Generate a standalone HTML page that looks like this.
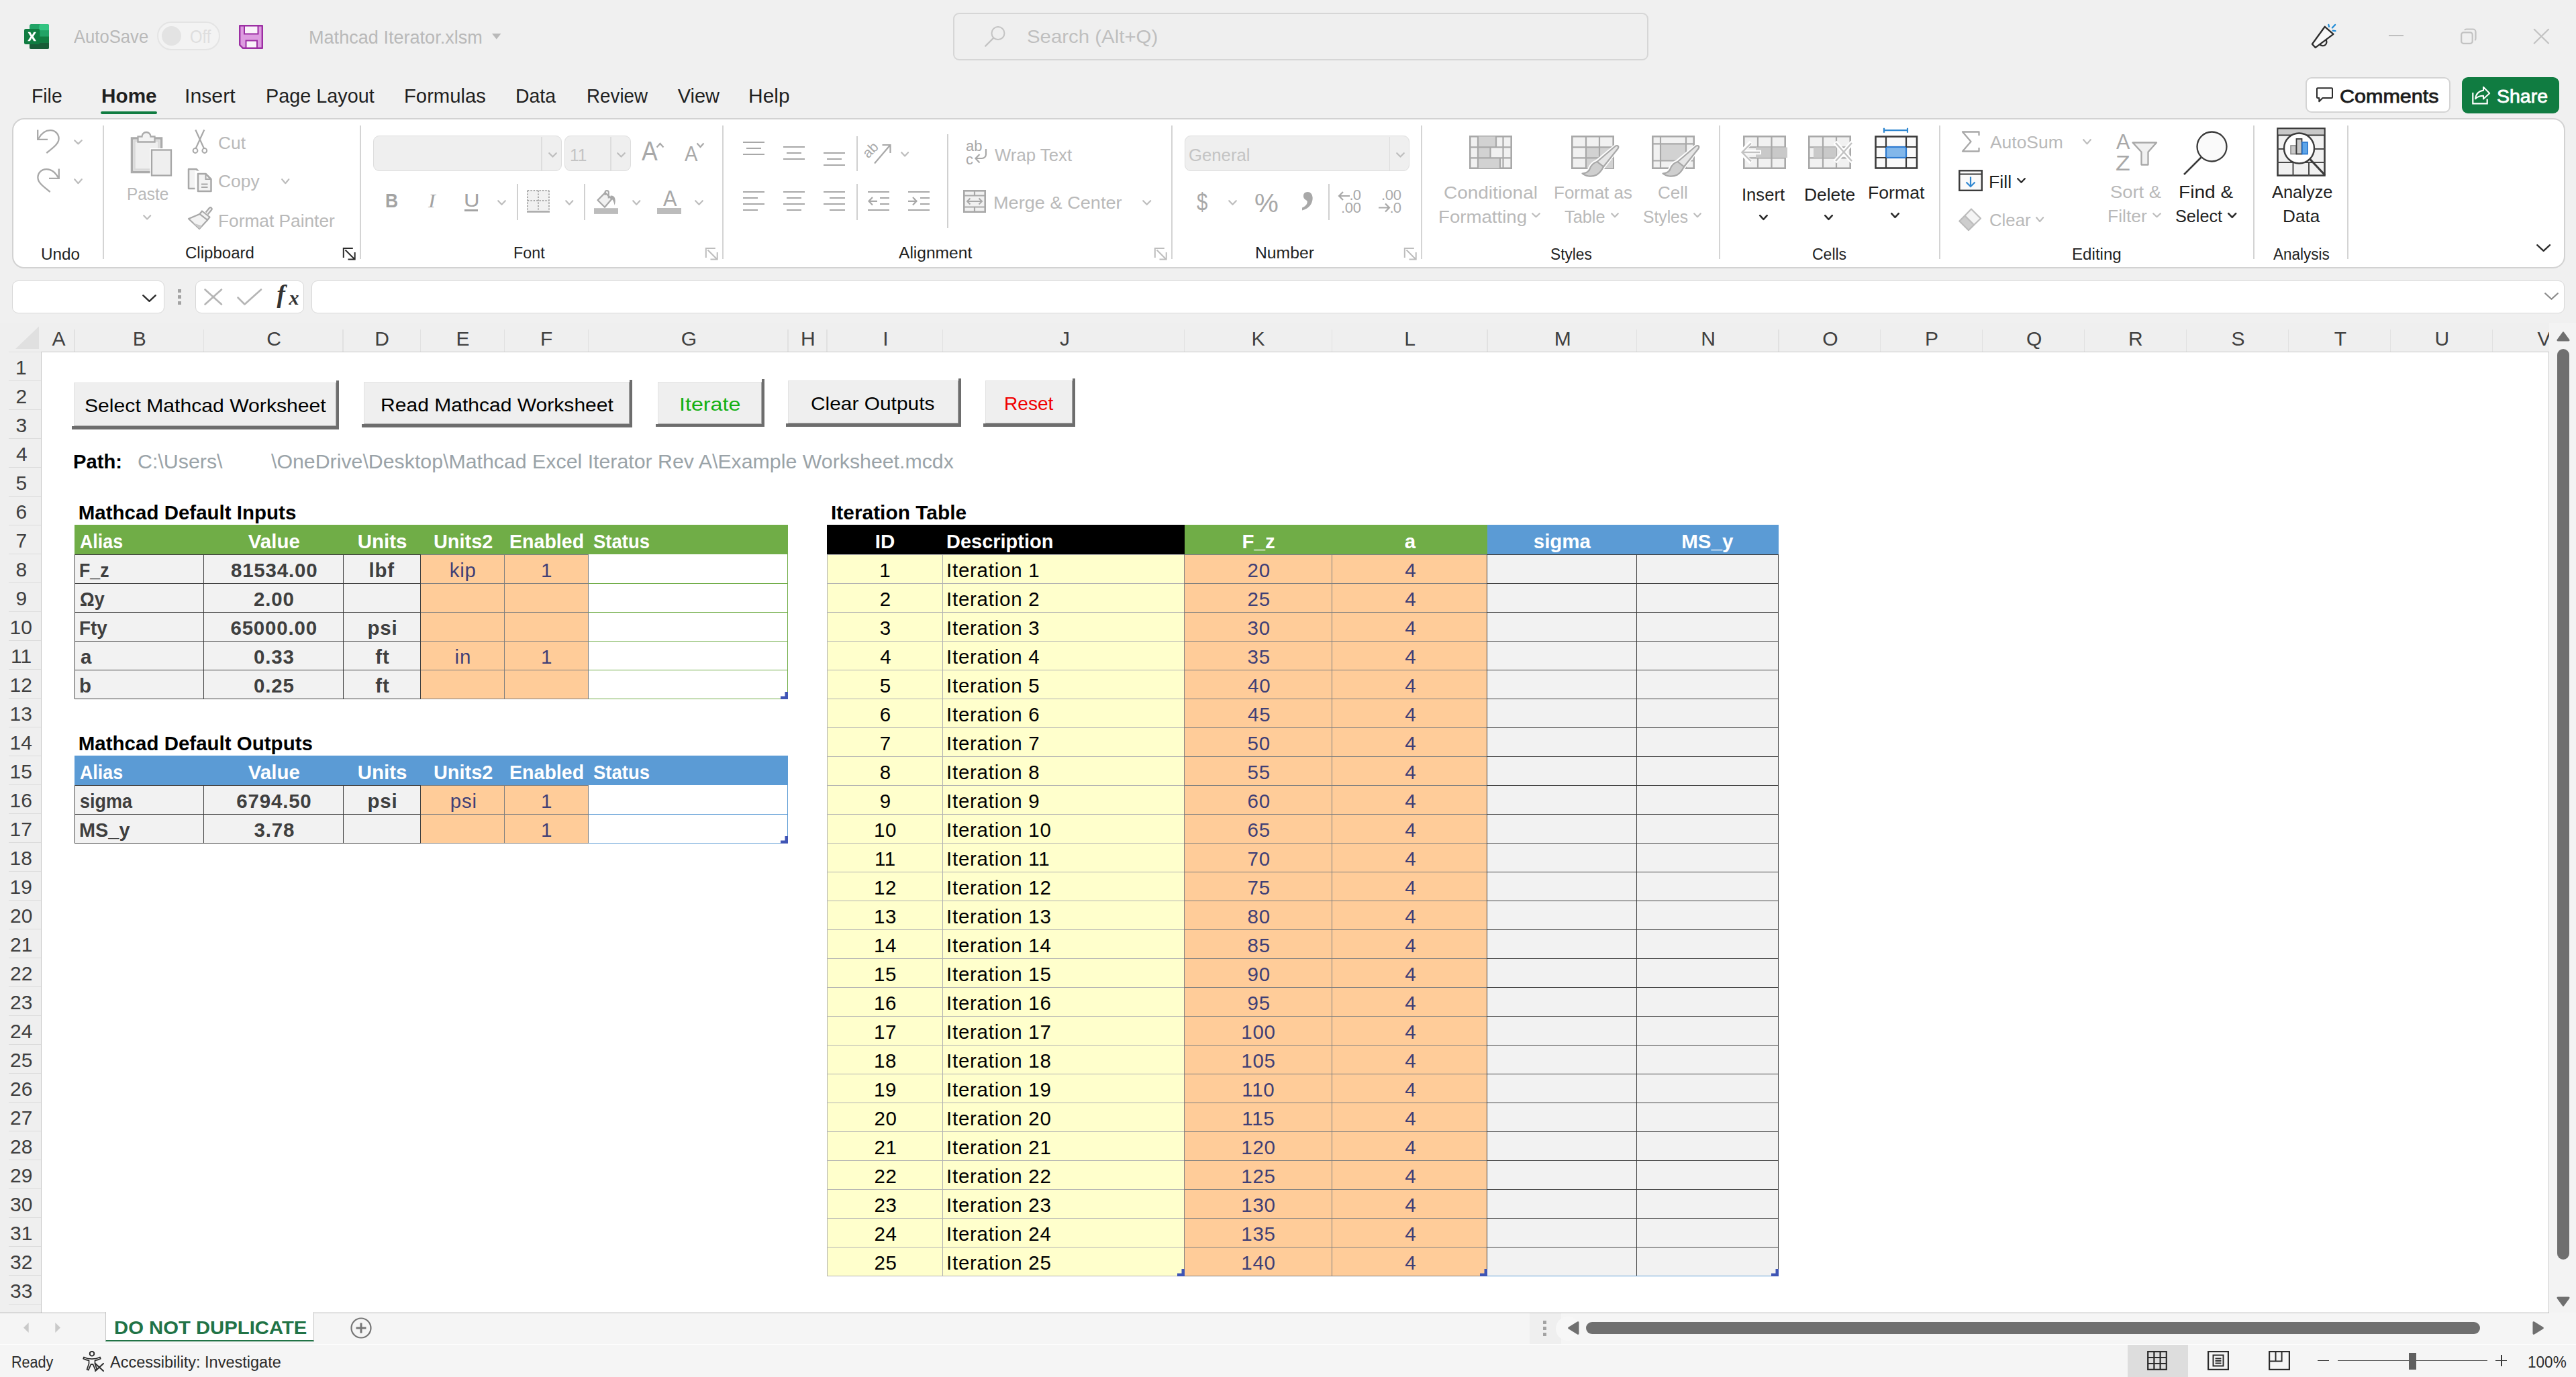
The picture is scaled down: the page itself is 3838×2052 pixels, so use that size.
<!DOCTYPE html>
<html lang="en"><head><meta charset="utf-8"><title>Mathcad Iterator.xlsm - Excel</title>
<style>
html,body{margin:0;padding:0;}
body{width:3838px;height:2052px;overflow:hidden;position:relative;background:#f0f0f0;font-family:"Liberation Sans",sans-serif;color:#1a1a1a;}
div,span.t,svg.i{position:absolute;}
div{box-sizing:border-box;}
span.t{white-space:pre;transform-origin:0 50%;}
svg.i{overflow:visible;}
</style></head><body>
<svg class="i" style="left:35.5px;top:35.5px;" width="37" height="37" viewBox="0 0 37 37">
<rect x="8" y="0" width="29" height="37" rx="2.500" fill="#21a366"/>
<rect x="22.500" y="0" width="14.500" height="9.500" rx="2" fill="#33c481"/><rect x="22.500" y="4" width="14.500" height="5.500" fill="#33c481"/>
<rect x="8" y="9.250" width="14.500" height="9.250" fill="#107c41"/><rect x="22.500" y="9.250" width="14.500" height="9.250" fill="#21a366"/>
<rect x="8" y="18.500" width="14.500" height="9.250" fill="#185c37"/><rect x="22.500" y="18.500" width="14.500" height="9.250" fill="#107c41"/>
<path d="M8 27.750h29v6.750a2.500 2.500 0 0 1-2.500 2.500h-24a2.500 2.500 0 0 1-2.500-2.500z" fill="#185c37"/>
<rect x="0" y="7" width="23.300" height="23" rx="2.300" fill="#107c41"/>
<path d="M5.400 11.800h3.800l2.500 4.600 2.600-4.600h3.600l-4.200 6.700 4.300 6.700h-3.800l-2.700-4.800-2.700 4.800H5.100l4.400-6.700z" fill="#fff"/>
</svg>
<span class="t" style="left:109.7px;top:37.77px;font-size:27.5px;line-height:34px;color:#b9b9b9;transform:scaleX(0.9319);">AutoSave</span>
<div style="left:233.5px;top:31.7px;width:94.5px;height:43.1px;background:#f3f3f3;border:2px solid #e4e4e4;border-radius:22px;"></div>
<div style="left:240.5px;top:38.5px;width:29.5px;height:29.5px;background:#e3e3e3;border-radius:50%;"></div>
<span class="t" style="left:282.54px;top:37.77px;font-size:27.5px;line-height:34px;color:#dedede;transform:scaleX(0.8639);">Off</span>
<svg class="i" style="left:356px;top:37px;" width="36" height="36" viewBox="0 0 36 36">
<path d="M1.200 1.200h33.600v33.600H6L1.200 30z" fill="#dd9be0" stroke="#9c2fa3" stroke-width="2.400" stroke-linejoin="round"/>
<rect x="8" y="1.500" width="20.500" height="12" fill="#faf2fa" stroke="#9c2fa3" stroke-width="2"/>
<rect x="10.500" y="23.500" width="16.500" height="11" fill="#faf2fa" stroke="#9c2fa3" stroke-width="2"/>
</svg>
<span class="t" style="left:460.02px;top:38.54px;font-size:27.3px;line-height:34px;color:#b9b9b9;transform:scaleX(0.9922);">Mathcad Iterator.xlsm</span>
<svg class="i" style="left:733px;top:49.5px;" width="13.5" height="9" viewBox="0 0 13.5 9"><path d="M0 0h13.5l-6.75 8.5z" fill="#b9b9b9"/></svg>
<div style="left:1420px;top:18.7px;width:1035.7px;height:71.8px;background:#efefef;border:2px solid #d6d6d6;border-radius:9px;"></div>
<svg class="i" style="left:1467px;top:38px;" width="32" height="32" viewBox="0 0 32 32"><circle cx="20" cy="11.5" r="9.5" fill="none" stroke="#c3c3c3" stroke-width="2"/><path d="M13.2 18.6L1.2 30.6" stroke="#c3c3c3" stroke-width="2.2" stroke-linecap="round"/></svg>
<span class="t" style="left:1529.53px;top:38.07px;font-size:27.5px;line-height:34px;color:#bfbfbf;transform:scaleX(1.0689);">Search (Alt+Q)</span>
<svg class="i" style="left:3444px;top:35px;" width="38" height="38" viewBox="0 0 38 38">
<path d="M12.300 31A5.500 5.500 0 0 0 21.300 24.200" fill="none" stroke="#2b2b2b" stroke-width="2.200"/>
<path d="M19.800 4.800L32.500 15.800 5.800 35.900 0.900 30.800z" fill="#f8f8f8" stroke="#2b2b2b" stroke-width="2.300" stroke-linejoin="round"/>
<path d="M25.400 1.900l0.700 2.900M30.800 6.500l4.300-4.600M31.700 10.700l3.900 0.500" stroke="#1e8ad6" stroke-width="2.200" stroke-linecap="round"/>
</svg>
<div style="left:3559px;top:51.5px;width:22px;height:2px;background:#bfbfbf;"></div>
<svg class="i" style="left:3666px;top:42px;" width="24" height="24" viewBox="0 0 24 24"><rect x="1.200" y="6.300" width="16.500" height="16.500" rx="3.300" fill="none" stroke="#c2c2c2" stroke-width="2.200"/><path d="M6 2.800a3 3 0 0 1 2.500-1.300H18.500a4 4 0 0 1 4 4V15.500a3 3 0 0 1-1.300 2.500" fill="none" stroke="#c2c2c2" stroke-width="2.200"/></svg>
<svg class="i" style="left:3775px;top:43px;" width="23" height="22" viewBox="0 0 23 22"><path d="M0.800 0.800L22 21.500M22 0.800L0.800 21.500" stroke="#c2c2c2" stroke-width="2.200" stroke-linecap="round"/></svg>
<span class="t" style="left:47.05px;top:125.35px;font-size:29px;line-height:36px;color:#1f1f1f;transform:scaleX(0.9773);">File</span>
<span class="t" style="left:150.97px;top:125.35px;font-size:29px;line-height:36px;font-weight:700;color:#1f1f1f;transform:scaleX(1.0253);">Home</span>
<div style="left:150px;top:165.5px;width:83.5px;height:4.6px;background:#107c41;border-radius:2.3px;"></div>
<span class="t" style="left:274.91px;top:125.35px;font-size:29px;line-height:36px;color:#1f1f1f;transform:scaleX(1.0429);">Insert</span>
<span class="t" style="left:395.61px;top:125.35px;font-size:29px;line-height:36px;color:#1f1f1f;transform:scaleX(0.9932);">Page Layout</span>
<span class="t" style="left:601.98px;top:125.35px;font-size:29px;line-height:36px;color:#1f1f1f;transform:scaleX(1.0085);">Formulas</span>
<span class="t" style="left:768.04px;top:125.35px;font-size:29px;line-height:36px;color:#1f1f1f;transform:scaleX(0.98);">Data</span>
<span class="t" style="left:873.68px;top:125.35px;font-size:29px;line-height:36px;color:#1f1f1f;transform:scaleX(0.9581);">Review</span>
<span class="t" style="left:1009.7px;top:125.35px;font-size:29px;line-height:36px;color:#1f1f1f;">View</span>
<span class="t" style="left:1114.63px;top:125.35px;font-size:29px;line-height:36px;color:#1f1f1f;transform:scaleX(1.0333);">Help</span>
<div style="left:3435px;top:115.3px;width:216.3px;height:53px;background:#fff;border:2px solid #d4d4d4;border-radius:9px;"></div>
<svg class="i" style="left:3451px;top:130px;" width="25" height="23" viewBox="0 0 25 23"><path d="M2 1.2h21a1 1 0 0 1 1 1V15a1 1 0 0 1-1 1H9.5L4.3 21.3V16H2a1 1 0 0 1-1-1V2.2a1 1 0 0 1 1-1z" fill="none" stroke="#2b2b2b" stroke-width="2" stroke-linejoin="round"/></svg>
<span class="t" style="left:3486.33px;top:125.12px;font-size:28.5px;line-height:36px;color:#1b1b1b;transform:scaleX(1.0701);-webkit-text-stroke:0.8px #1b1b1b;">Comments</span>
<div style="left:3668px;top:115px;width:145px;height:53.6px;background:#107c41;border-radius:9px;"></div>
<svg class="i" style="left:3683px;top:129px;" width="28" height="27" viewBox="0 0 28 27"><path d="M1.300 9V25.400H22.700V18.500" fill="none" stroke="#fff" stroke-width="2.200"/><path d="M17 0.800L26.200 10 17 18.500V13.800C11.500 13.800 8 15.200 5.200 18.300 5.700 11.500 10 6.800 17 5.800z" fill="none" stroke="#fff" stroke-width="2" stroke-linejoin="round"/></svg>
<span class="t" style="left:3720px;top:125.12px;font-size:28.5px;line-height:36px;color:#fff;-webkit-text-stroke:0.8px #fff;">Share</span>
<div style="left:18px;top:176px;width:3804px;height:224px;background:#fff;border:2px solid #d2d2d2;border-radius:18px;"></div>
<div style="left:153.2px;top:187px;width:1.7px;height:199px;background:#d4d4d4;"></div>
<div style="left:536.2px;top:187px;width:1.7px;height:199px;background:#d4d4d4;"></div>
<div style="left:1076.2px;top:187px;width:1.7px;height:199px;background:#d4d4d4;"></div>
<div style="left:1745.2px;top:187px;width:1.7px;height:199px;background:#d4d4d4;"></div>
<div style="left:2117.2px;top:187px;width:1.7px;height:199px;background:#d4d4d4;"></div>
<div style="left:2561.2px;top:187px;width:1.7px;height:199px;background:#d4d4d4;"></div>
<div style="left:2888.9px;top:187px;width:1.7px;height:199px;background:#d4d4d4;"></div>
<div style="left:3357.2px;top:187px;width:1.7px;height:199px;background:#d4d4d4;"></div>
<div style="left:3497px;top:187px;width:1.7px;height:199px;background:#d4d4d4;"></div>
<svg class="i" style="left:54px;top:192px;" width="36" height="38" viewBox="0 0 36 38"><path d="M2.200 1.500V15.800H17" fill="none" stroke="#a8a8a8" stroke-width="2.300"/><path d="M3.200 14.800C8 6 14.500 2.200 21 2.200c7.500 0 12.600 5.800 12.600 12.300 0 7-6 12-18.300 21.500" fill="none" stroke="#a8a8a8" stroke-width="2.300"/></svg>
<svg class="i" style="left:54px;top:250px;" width="36" height="38" viewBox="0 0 36 38"><g transform="translate(36,0) scale(-1,1)"><path d="M2.200 1.500V15.800H17" fill="none" stroke="#a8a8a8" stroke-width="2.300"/><path d="M3.200 14.800C8 6 14.500 2.200 21 2.200c7.500 0 12.600 5.800 12.600 12.300 0 7-6 12-18.300 21.500" fill="none" stroke="#a8a8a8" stroke-width="2.300"/></g></svg>
<svg class="i" style="left:108px;top:206px;" width="17" height="11.6" viewBox="0 0 17 11.6"><path d="M3.2 3.2 L8.5 8.4 L13.8 3.2" fill="none" stroke="#bdbdbd" stroke-width="2.2" stroke-linecap="round" stroke-linejoin="round"/></svg>
<svg class="i" style="left:108px;top:263.6px;" width="17" height="12.4" viewBox="0 0 17 12.4"><path d="M3.2 3.2 L8.5 9.2 L13.8 3.2" fill="none" stroke="#bdbdbd" stroke-width="2.2" stroke-linecap="round" stroke-linejoin="round"/></svg>
<span class="t" style="left:60.94px;top:364.93px;font-size:23px;line-height:29px;color:#1f1f1f;transform:scaleX(1.0566);">Undo</span>
<svg class="i" style="left:194px;top:195px;" width="64" height="69" viewBox="0 0 64 69">
<rect x="2.500" y="11" width="44" height="50.500" fill="#efefef" stroke="#ababab" stroke-width="3.500"/>
<rect x="6.500" y="15" width="36" height="42.500" fill="none" stroke="#d9d9d9" stroke-width="2.500"/>
<path d="M11.500 16.500V8.500H17.500a6.500 6.500 0 0 1 13 0H36.500V16.500z" fill="#f3f3f3" stroke="#ababab" stroke-width="2.300"/>
<rect x="29.500" y="26" width="33" height="42" fill="#fff"/>
<rect x="32" y="28.500" width="29" height="38" fill="#efefef" stroke="#a6a6a6" stroke-width="2.300"/></svg>
<span class="t" style="left:189.12px;top:272.99px;font-size:26px;line-height:32px;color:#b9b9b9;transform:scaleX(0.9375);">Paste</span>
<svg class="i" style="left:210.6px;top:318px;" width="16.4" height="11.6" viewBox="0 0 16.4 11.6"><path d="M3.2 3.2 L8.2 8.4 L13.2 3.2" fill="none" stroke="#bdbdbd" stroke-width="2.2" stroke-linecap="round" stroke-linejoin="round"/></svg>
<svg class="i" style="left:285px;top:192px;" width="26" height="38" viewBox="0 0 26 38"><path d="M6.300 1.500L19.300 30M19.300 1.500L6.300 30" stroke="#a8a8a8" stroke-width="2.200"/><circle cx="6" cy="32.500" r="3.400" fill="#fff" stroke="#a8a8a8" stroke-width="2"/><circle cx="19.800" cy="32.500" r="3.400" fill="#fff" stroke="#a8a8a8" stroke-width="2"/></svg>
<span class="t" style="left:325.38px;top:196.99px;font-size:26px;line-height:32px;color:#b9b9b9;transform:scaleX(1.015);">Cut</span>
<svg class="i" style="left:279px;top:250px;" width="38" height="37" viewBox="0 0 38 37">
<path d="M2 2H13.500L19.500 8V31H2z" fill="#f3f3f3" stroke="#a8a8a8" stroke-width="2.500" stroke-linejoin="round"/>
<path d="M14 7H27.500L36.200 15.500V35.500H14z" fill="#fff" stroke="#fff" stroke-width="5"/>
<path d="M16 9H27.500L35.500 17V35H16z" fill="#f3f3f3" stroke="#a8a8a8" stroke-width="2.500" stroke-linejoin="round"/>
<path d="M27.500 9V17H35.500" fill="none" stroke="#a8a8a8" stroke-width="2"/>
<path d="M21 24.500H30.500M21 29H30.500" stroke="#a8a8a8" stroke-width="2"/></svg>
<span class="t" style="left:325.38px;top:253.69px;font-size:26px;line-height:32px;color:#b9b9b9;transform:scaleX(1.0183);">Copy</span>
<svg class="i" style="left:416.5px;top:263.6px;" width="16.5" height="12.4" viewBox="0 0 16.5 12.4"><path d="M3.2 3.2 L8.25 9.2 L13.3 3.2" fill="none" stroke="#bdbdbd" stroke-width="2.2" stroke-linecap="round" stroke-linejoin="round"/></svg>
<svg class="i" style="left:279px;top:308px;" width="38" height="35" viewBox="0 0 38 35">
<path d="M27.500 8.500L33 1.800a2.200 2.200 0 0 1 3 3.200L30.500 11.500" fill="#f3f3f3" stroke="#a8a8a8" stroke-width="2.200"/>
<path d="M22 6.500L33.500 15.500 30 20 18.500 11z" fill="#f3f3f3" stroke="#a8a8a8" stroke-width="2.200" stroke-linejoin="round"/>
<path d="M18.500 11L30 20 18 33 2 18z" fill="#f3f3f3" stroke="#a8a8a8" stroke-width="2.200" stroke-linejoin="round"/>
<path d="M9 24.500L22 28.500 18 33 2.500 18.500z" fill="#c9c9c9"/></svg>
<span class="t" style="left:324.98px;top:312.79px;font-size:26px;line-height:32px;color:#b9b9b9;transform:scaleX(1.0106);">Format Painter</span>
<span class="t" style="left:275.55px;top:362.73px;font-size:23px;line-height:29px;color:#1f1f1f;transform:scaleX(1.0454);">Clipboard</span>
<svg class="i" style="left:510.5px;top:368.5px;" width="19" height="19" viewBox="0 0 19 19"><path d="M0.800 15V1.100H14.800M3.500 3.500L17.500 17.500M7.500 17.400H17.700V7" fill="none" stroke="#2b2b2b" stroke-width="2"/></svg>
<div style="left:556px;top:202px;width:280.5px;height:53px;background:#efefef;border:1.800px solid #dddddd;border-radius:9px;"></div>
<div style="left:806px;top:203.5px;width:1.6px;height:50px;background:#dddddd;"></div>
<svg class="i" style="left:814.5px;top:225px;" width="17" height="11.8" viewBox="0 0 17 11.8"><path d="M3.2 3.2 L8.5 8.6 L13.8 3.2" fill="none" stroke="#bdbdbd" stroke-width="2.2" stroke-linecap="round" stroke-linejoin="round"/></svg>
<div style="left:841px;top:202px;width:99px;height:53px;background:#efefef;border:1.800px solid #dddddd;border-radius:9px;"></div>
<div style="left:909px;top:203.5px;width:1.6px;height:50px;background:#dddddd;"></div>
<span class="t" style="left:848.56px;top:214.99px;font-size:26px;line-height:32px;color:#c4c4c4;transform:scaleX(0.9423);">11</span>
<svg class="i" style="left:917px;top:225px;" width="17" height="11.8" viewBox="0 0 17 11.8"><path d="M3.2 3.2 L8.5 8.6 L13.8 3.2" fill="none" stroke="#bdbdbd" stroke-width="2.2" stroke-linecap="round" stroke-linejoin="round"/></svg>
<span class="t" style="left:956px;top:200.47px;font-size:40.5px;line-height:51px;color:#a8a8a8;transform:scaleX(0.8786);">A</span>
<svg class="i" style="left:977px;top:212px;" width="13" height="9" viewBox="0 0 13 9"><path d="M1.500 7.500L6.500 2 11.500 7.500" fill="none" stroke="#a8a8a8" stroke-width="2.200"/></svg>
<span class="t" style="left:1020px;top:209.76px;font-size:31px;line-height:39px;color:#a8a8a8;transform:scaleX(0.9381);">A</span>
<svg class="i" style="left:1037px;top:212px;" width="13" height="9" viewBox="0 0 13 9"><path d="M1.500 1.500L6.500 7 11.500 1.500" fill="none" stroke="#a8a8a8" stroke-width="2.200"/></svg>
<span class="t" style="left:574.21px;top:280.28px;font-size:29.5px;line-height:37px;font-weight:700;color:#a3a3a3;transform:scaleX(0.8947);">B</span>
<span class="t" style="left:638.08px;top:279.61px;font-size:30px;line-height:38px;font-style:italic;color:#a3a3a3;font-family:'Liberation Serif',serif;transform:scaleX(1.0769);">I</span>
<span class="t" style="left:690.71px;top:280.42px;font-size:28.5px;line-height:36px;color:#a3a3a3;transform:scaleX(1.1471);">U</span>
<div style="left:692px;top:312px;width:20px;height:3px;background:#a3a3a3;"></div>
<svg class="i" style="left:739px;top:296px;" width="17" height="12" viewBox="0 0 17 12"><path d="M3.2 3.2 L8.5 8.8 L13.8 3.2" fill="none" stroke="#bdbdbd" stroke-width="2.2" stroke-linecap="round" stroke-linejoin="round"/></svg>
<div style="left:770.2px;top:274px;width:1.7px;height:53.6px;background:#d0d0d0;"></div>
<svg class="i" style="left:785px;top:283px;" width="34" height="34" viewBox="0 0 34 34"><rect x="0" y="0" width="34" height="32" fill="#f1f1f1"/>
<path d="M1 1H33M1 1V31M33 1V31M17 1V31M1 16H33" fill="none" stroke="#a8a8a8" stroke-width="2" stroke-dasharray="2.200 2.200"/>
<path d="M0 32.500H34" stroke="#a8a8a8" stroke-width="2.600"/></svg>
<svg class="i" style="left:839.5px;top:296px;" width="16.5" height="12" viewBox="0 0 16.5 12"><path d="M3.2 3.2 L8.25 8.8 L13.3 3.2" fill="none" stroke="#bdbdbd" stroke-width="2.2" stroke-linecap="round" stroke-linejoin="round"/></svg>
<div style="left:870.2px;top:274px;width:1.7px;height:53.6px;background:#d0d0d0;"></div>
<svg class="i" style="left:885px;top:282px;" width="36" height="38" viewBox="0 0 36 38">
<path d="M16.600 5.100L5.500 16.200 16 26.700 26.500 14.400z" fill="#f1f1f1" stroke="#a8a8a8" stroke-width="2.300" stroke-linejoin="round"/>
<path d="M16.600 9V4.800a2.600 2.600 0 0 1 5.200 0V13.500" fill="none" stroke="#a8a8a8" stroke-width="2.200"/>
<path d="M24.500 9.800C29 8.800 31.500 12 31.700 16.800 31.800 19.500 31.200 22 30.600 24 29.700 18.500 27.800 14.800 24.300 13.600z" fill="#a8a8a8"/>
<rect x="0" y="28.200" width="36" height="8.700" fill="#bcbcbc"/></svg>
<svg class="i" style="left:939.5px;top:296px;" width="16.5" height="12" viewBox="0 0 16.5 12"><path d="M3.2 3.2 L8.25 8.8 L13.3 3.2" fill="none" stroke="#bdbdbd" stroke-width="2.2" stroke-linecap="round" stroke-linejoin="round"/></svg>
<span class="t" style="left:987.5px;top:274.79px;font-size:33.5px;line-height:42px;color:#a8a8a8;transform:scaleX(0.9174);">A</span>
<div style="left:979px;top:310.2px;width:36px;height:8.7px;background:#bcbcbc;"></div>
<svg class="i" style="left:1033px;top:296px;" width="17" height="12" viewBox="0 0 17 12"><path d="M3.2 3.2 L8.5 8.8 L13.8 3.2" fill="none" stroke="#bdbdbd" stroke-width="2.2" stroke-linecap="round" stroke-linejoin="round"/></svg>
<span class="t" style="left:765.39px;top:363.13px;font-size:23px;line-height:29px;color:#1f1f1f;transform:scaleX(1.013);">Font</span>
<svg class="i" style="left:1050.5px;top:368.5px;" width="19" height="19" viewBox="0 0 19 19"><path d="M0.800 15V1.100H14.800M3.500 3.500L17.500 17.500M7.500 17.400H17.700V7" fill="none" stroke="#bdbdbd" stroke-width="2"/></svg>
<div style="left:1107px;top:211px;width:32px;height:2px;background:#a8a8a8;"></div>
<div style="left:1112px;top:220px;width:22px;height:2px;background:#a8a8a8;"></div>
<div style="left:1107px;top:229px;width:32px;height:2px;background:#a8a8a8;"></div>
<div style="left:1167px;top:218px;width:32px;height:2px;background:#a8a8a8;"></div>
<div style="left:1172px;top:227px;width:22px;height:2px;background:#a8a8a8;"></div>
<div style="left:1167px;top:236px;width:32px;height:2px;background:#a8a8a8;"></div>
<div style="left:1227px;top:227px;width:32px;height:2px;background:#a8a8a8;"></div>
<div style="left:1232px;top:236px;width:22px;height:2px;background:#a8a8a8;"></div>
<div style="left:1227px;top:245px;width:32px;height:2px;background:#a8a8a8;"></div>
<div style="left:1276.2px;top:202.6px;width:1.7px;height:52.8px;background:#d0d0d0;"></div>
<svg class="i" style="left:1290px;top:209px;" width="40" height="38" viewBox="0 0 40 38"><text x="2" y="20" font-family="Liberation Sans,sans-serif" font-size="21" fill="#a8a8a8" transform="rotate(-45 12 22)">ab</text>
<path d="M13 34.500L36 7.500M24.500 7H36.500V19" fill="none" stroke="#a8a8a8" stroke-width="2.200"/></svg>
<svg class="i" style="left:1339.7px;top:224px;" width="16.3" height="11.7" viewBox="0 0 16.3 11.7"><path d="M3.2 3.2 L8.15 8.5 L13.1 3.2" fill="none" stroke="#bdbdbd" stroke-width="2.2" stroke-linecap="round" stroke-linejoin="round"/></svg>
<div style="left:1411.2px;top:200px;width:1.7px;height:139.6px;background:#d0d0d0;"></div>
<svg class="i" style="left:1439px;top:208px;" width="34" height="40" viewBox="0 0 34 40"><text x="0" y="17" font-family="Liberation Sans,sans-serif" font-size="22" fill="#a8a8a8">ab</text>
<text x="0" y="36.500" font-family="Liberation Sans,sans-serif" font-size="22" fill="#a8a8a8">c</text>
<path d="M30 14V22a6 6 0 0 1-6 6H15M20.500 22L14.500 28 20.500 34.500" fill="none" stroke="#a8a8a8" stroke-width="2.200"/></svg>
<span class="t" style="left:1482px;top:214.99px;font-size:26px;line-height:32px;color:#b9b9b9;transform:scaleX(0.9915);">Wrap Text</span>
<div style="left:1107px;top:285px;width:32px;height:2px;background:#a8a8a8;"></div>
<div style="left:1107px;top:294px;width:22px;height:2px;background:#a8a8a8;"></div>
<div style="left:1107px;top:303px;width:32px;height:2px;background:#a8a8a8;"></div>
<div style="left:1107px;top:312px;width:22px;height:2px;background:#a8a8a8;"></div>
<div style="left:1167px;top:285px;width:32px;height:2px;background:#a8a8a8;"></div>
<div style="left:1172px;top:294px;width:22px;height:2px;background:#a8a8a8;"></div>
<div style="left:1167px;top:303px;width:32px;height:2px;background:#a8a8a8;"></div>
<div style="left:1172px;top:312px;width:22px;height:2px;background:#a8a8a8;"></div>
<div style="left:1227px;top:285px;width:32px;height:2px;background:#a8a8a8;"></div>
<div style="left:1236px;top:294px;width:23px;height:2px;background:#a8a8a8;"></div>
<div style="left:1227px;top:303px;width:32px;height:2px;background:#a8a8a8;"></div>
<div style="left:1236px;top:312px;width:23px;height:2px;background:#a8a8a8;"></div>
<div style="left:1276.2px;top:274px;width:1.7px;height:53.6px;background:#d0d0d0;"></div>
<div style="left:1293px;top:285px;width:32px;height:2px;background:#a8a8a8;"></div>
<div style="left:1293px;top:312px;width:32px;height:2px;background:#a8a8a8;"></div>
<div style="left:1311px;top:294px;width:14px;height:2px;background:#a8a8a8;"></div>
<div style="left:1311px;top:303px;width:14px;height:2px;background:#a8a8a8;"></div>
<svg class="i" style="left:1293px;top:291px;" width="16" height="18" viewBox="0 0 16 18"><path d="M1.500 8.800H14M7 3L1.500 8.800 7 14.600" fill="none" stroke="#a8a8a8" stroke-width="2.200"/></svg>
<div style="left:1353px;top:285px;width:32px;height:2px;background:#a8a8a8;"></div>
<div style="left:1353px;top:312px;width:32px;height:2px;background:#a8a8a8;"></div>
<div style="left:1371px;top:294px;width:14px;height:2px;background:#a8a8a8;"></div>
<div style="left:1371px;top:303px;width:14px;height:2px;background:#a8a8a8;"></div>
<svg class="i" style="left:1353px;top:291px;" width="16" height="18" viewBox="0 0 16 18"><path d="M0 8.800H12.500M7 3L12.500 8.800 7 14.600" fill="none" stroke="#a8a8a8" stroke-width="2.200"/></svg>
<svg class="i" style="left:1435px;top:283px;" width="34" height="34" viewBox="0 0 34 34"><rect x="1.300" y="1.300" width="31.400" height="31.400" fill="#f1f1f1" stroke="#a8a8a8" stroke-width="2.600"/>
<path d="M1 8.500H33M1 25.500H33M17 1V8.500M17 25.500V33" stroke="#a8a8a8" stroke-width="2.200"/>
<path d="M6 17H28M10.500 12.500L6 17 10.500 21.500M23.500 12.500L28 17 23.500 21.500" fill="none" stroke="#a8a8a8" stroke-width="2"/></svg>
<span class="t" style="left:1479.91px;top:286.29px;font-size:26px;line-height:32px;color:#b9b9b9;transform:scaleX(1.044);">Merge &amp; Center</span>
<svg class="i" style="left:1700px;top:296px;" width="17.4" height="12" viewBox="0 0 17.4 12"><path d="M3.2 3.2 L8.7 8.8 L14.2 3.2" fill="none" stroke="#bdbdbd" stroke-width="2.2" stroke-linecap="round" stroke-linejoin="round"/></svg>
<span class="t" style="left:1338.8px;top:363.13px;font-size:23px;line-height:29px;color:#1f1f1f;transform:scaleX(1.068);">Alignment</span>
<svg class="i" style="left:1719.5px;top:368.5px;" width="19" height="19" viewBox="0 0 19 19"><path d="M0.800 15V1.100H14.800M3.500 3.500L17.500 17.500M7.500 17.400H17.700V7" fill="none" stroke="#bdbdbd" stroke-width="2"/></svg>
<div style="left:1765px;top:202px;width:335px;height:53px;background:#efefef;border:1.800px solid #dddddd;border-radius:9px;"></div>
<div style="left:2069.7px;top:203.5px;width:1.6px;height:50px;background:#dddddd;"></div>
<span class="t" style="left:1771.01px;top:214.99px;font-size:26px;line-height:32px;color:#c4c4c4;transform:scaleX(0.989);">General</span>
<svg class="i" style="left:2078px;top:225px;" width="17" height="11.8" viewBox="0 0 17 11.8"><path d="M3.2 3.2 L8.5 8.6 L13.8 3.2" fill="none" stroke="#bdbdbd" stroke-width="2.2" stroke-linecap="round" stroke-linejoin="round"/></svg>
<span class="t" style="left:1783.4px;top:278.53px;font-size:36px;line-height:45px;color:#a8a8a8;transform:scaleX(0.815);">$</span>
<svg class="i" style="left:1828px;top:296px;" width="17" height="12" viewBox="0 0 17 12"><path d="M3.2 3.2 L8.5 8.8 L13.8 3.2" fill="none" stroke="#bdbdbd" stroke-width="2.2" stroke-linecap="round" stroke-linejoin="round"/></svg>
<span class="t" style="left:1868.67px;top:278.49px;font-size:39px;line-height:49px;color:#a8a8a8;transform:scaleX(1.0333);">%</span>
<span class="t" style="left:1939.13px;top:212.81px;font-size:90px;line-height:112px;font-weight:700;color:#a8a8a8;font-family:'Liberation Serif',serif;transform:scaleX(0.8737);">,</span>
<div style="left:1979.2px;top:274px;width:1.7px;height:53.6px;background:#d0d0d0;"></div>
<svg class="i" style="left:1993px;top:281px;" width="38" height="38" viewBox="0 0 38 38"><text x="17.500" y="17" font-family="Liberation Sans,sans-serif" font-size="22" fill="#a8a8a8" textLength="17.500">.0</text><text x="5" y="35.500" font-family="Liberation Sans,sans-serif" font-size="22" fill="#a8a8a8" textLength="30">.00</text>
<path d="M2 11H18M8 5L2 11 8 17" fill="none" stroke="#a8a8a8" stroke-width="2.200"/></svg>
<svg class="i" style="left:2052px;top:281px;" width="38" height="38" viewBox="0 0 38 38"><text x="6" y="17" font-family="Liberation Sans,sans-serif" font-size="22" fill="#a8a8a8" textLength="30">.00</text><text x="18.500" y="35.500" font-family="Liberation Sans,sans-serif" font-size="22" fill="#a8a8a8" textLength="17.500">.0</text>
<path d="M2 28.500H18M12 22.500L18 28.500 12 34.500" fill="none" stroke="#a8a8a8" stroke-width="2.200"/></svg>
<span class="t" style="left:1869.93px;top:363.13px;font-size:23px;line-height:29px;color:#1f1f1f;transform:scaleX(1.0741);">Number</span>
<svg class="i" style="left:2091.5px;top:368.5px;" width="19" height="19" viewBox="0 0 19 19"><path d="M0.800 15V1.100H14.800M3.500 3.500L17.500 17.500M7.500 17.400H17.700V7" fill="none" stroke="#bdbdbd" stroke-width="2"/></svg>
<svg class="i" style="left:2189px;top:202px;" width="64" height="50" viewBox="0 0 64 50"><rect x="1.300" y="1.300" width="61.400" height="47.400" fill="#f1f1f1" stroke="#a8a8a8" stroke-width="2.600"/>
<rect x="13" y="1.500" width="27" height="15.500" fill="#d2d2d2"/><rect x="13" y="17.500" width="18" height="15.500" fill="#d2d2d2"/><rect x="13" y="33.500" width="33" height="15" fill="#d2d2d2"/>
<path d="M1 17.300H63M1 33.300H63M13 1V49M50.500 1V49" stroke="#a8a8a8" stroke-width="2.200"/>
<path d="M40 1V17.300M31.500 17.300V33.300M46 33.300V49" stroke="#a8a8a8" stroke-width="2.200"/></svg>
<span class="t" style="left:2150.92px;top:270.99px;font-size:26px;line-height:32px;color:#b9b9b9;transform:scaleX(1.0758);">Conditional</span>
<span class="t" style="left:2142.87px;top:306.99px;font-size:26px;line-height:32px;color:#b9b9b9;transform:scaleX(1.0628);">Formatting</span>
<svg class="i" style="left:2280px;top:315.4px;" width="17" height="11.4" viewBox="0 0 17 11.4"><path d="M3.2 3.2 L8.5 8.2 L13.8 3.2" fill="none" stroke="#bdbdbd" stroke-width="2.2" stroke-linecap="round" stroke-linejoin="round"/></svg>
<svg class="i" style="left:2341px;top:202px;" width="70" height="62" viewBox="0 0 70 62"><rect x="1.300" y="1.300" width="61.400" height="47.400" fill="#f1f1f1" stroke="#a8a8a8" stroke-width="2.600"/>
<rect x="22" y="17.500" width="20" height="15.500" fill="#d2d2d2"/><rect x="42" y="17.500" width="20" height="31" fill="#d2d2d2"/><rect x="22" y="33.500" width="20" height="15" fill="#d2d2d2"/>
<path d="M1 17.300H63M1 33.300H63M22 1V49M42 1V49" stroke="#a8a8a8" stroke-width="2.200"/>
<path d="M66 15.500C69.500 14 71.500 16.500 69.500 19.500L48 47C44 54 40 60 30 61.500 24 62 19 60 15.500 56.500 21 56 25 54 27 50 28.500 45 32 40.500 38 38.500z" fill="#fff" stroke="#fff" stroke-width="5" stroke-linejoin="round"/>
<path d="M66 15.500C69.500 14 71.500 16.500 69.500 19.500L48 46.500 38.500 39z" fill="#e6e6e6" stroke="#a8a8a8" stroke-width="2.200" stroke-linejoin="round"/>
<path d="M38.500 39C32 41 29 45.500 27.500 50 26 54 21.500 56 16.500 56.500 21 60.500 30 62.500 38 58.500 43.500 55.500 46 50.500 48 46.500z" fill="#cfcfcf" stroke="#a8a8a8" stroke-width="2.200" stroke-linejoin="round"/></svg>
<span class="t" style="left:2315.01px;top:270.99px;font-size:26px;line-height:32px;color:#b9b9b9;">Format as</span>
<span class="t" style="left:2330.6px;top:306.99px;font-size:26px;line-height:32px;color:#b9b9b9;transform:scaleX(0.9742);">Table</span>
<svg class="i" style="left:2398px;top:315.4px;" width="16" height="11.4" viewBox="0 0 16 11.4"><path d="M3.2 3.2 L8 8.2 L12.8 3.2" fill="none" stroke="#bdbdbd" stroke-width="2.2" stroke-linecap="round" stroke-linejoin="round"/></svg>
<svg class="i" style="left:2461px;top:202px;" width="70" height="62" viewBox="0 0 70 62"><rect x="1.300" y="1.300" width="61.400" height="47.400" fill="#f1f1f1" stroke="#a8a8a8" stroke-width="2.600"/>
<rect x="13" y="12.500" width="38" height="25" fill="#d2d2d2"/>
<path d="M1 12.300H63M1 37.500H63M13 1V49M51 1V49" stroke="#a8a8a8" stroke-width="2.200"/>
<path d="M66 15.500C69.500 14 71.500 16.500 69.500 19.500L48 47C44 54 40 60 30 61.500 24 62 19 60 15.500 56.500 21 56 25 54 27 50 28.500 45 32 40.500 38 38.500z" fill="#fff" stroke="#fff" stroke-width="5" stroke-linejoin="round"/>
<path d="M66 15.500C69.500 14 71.500 16.500 69.500 19.500L48 46.500 38.500 39z" fill="#e6e6e6" stroke="#a8a8a8" stroke-width="2.200" stroke-linejoin="round"/>
<path d="M38.500 39C32 41 29 45.500 27.500 50 26 54 21.500 56 16.500 56.500 21 60.500 30 62.500 38 58.500 43.500 55.500 46 50.500 48 46.500z" fill="#cfcfcf" stroke="#a8a8a8" stroke-width="2.200" stroke-linejoin="round"/></svg>
<span class="t" style="left:2470px;top:270.99px;font-size:26px;line-height:32px;color:#b9b9b9;">Cell</span>
<span class="t" style="left:2447.65px;top:306.99px;font-size:26px;line-height:32px;color:#b9b9b9;transform:scaleX(0.9486);">Styles</span>
<svg class="i" style="left:2521px;top:315.4px;" width="16" height="11.4" viewBox="0 0 16 11.4"><path d="M3.2 3.2 L8 8.2 L12.8 3.2" fill="none" stroke="#bdbdbd" stroke-width="2.2" stroke-linecap="round" stroke-linejoin="round"/></svg>
<span class="t" style="left:2309.61px;top:364.93px;font-size:23px;line-height:29px;color:#1f1f1f;transform:scaleX(0.9869);">Styles</span>
<svg class="i" style="left:2592px;top:202px;" width="72" height="50" viewBox="0 0 72 50"><rect x="6.300" y="1.300" width="61.400" height="47.400" fill="#f1f1f1" stroke="#a8a8a8" stroke-width="2.600"/>
<path d="M6 17.300H68M6 33.300H68M27 1V49M47.500 1V49" stroke="#a8a8a8" stroke-width="2.200"/>
<rect x="24" y="17.500" width="47" height="15.500" fill="#c9c9c9"/><path d="M47.500 17.300V33.300" stroke="#a8a8a8" stroke-width="2.200"/>
<path d="M17 10L2 25 17 40M2 25H32" fill="none" stroke="#fff" stroke-width="6.500"/>
<path d="M17 11.500L3.500 25 17 38.500M3.500 25H30" fill="none" stroke="#c2c2c2" stroke-width="2.400"/></svg>
<span class="t" style="left:2595.03px;top:273.99px;font-size:26px;line-height:32px;color:#1f1f1f;transform:scaleX(0.9844);">Insert</span>
<svg class="i" style="left:2618.6px;top:317.7px;" width="16.9" height="12" viewBox="0 0 16.9 12"><path d="M3.2 3.2 L8.45 8.8 L13.7 3.2" fill="none" stroke="#2b2b2b" stroke-width="2.6" stroke-linecap="round" stroke-linejoin="round"/></svg>
<svg class="i" style="left:2694px;top:202px;" width="70" height="50" viewBox="0 0 70 50"><rect x="1.300" y="1.300" width="61.400" height="47.400" fill="#f1f1f1" stroke="#a8a8a8" stroke-width="2.600"/>
<path d="M1 17.300H63M1 33.300H63M22 1V49M42 1V49" stroke="#a8a8a8" stroke-width="2.200"/>
<rect x="8" y="17.500" width="34" height="15.500" fill="#c9c9c9"/><path d="M22 17.300V33.300" stroke="#a8a8a8" stroke-width="2.200"/>
<path d="M40 10L66 39M66 10L40 39" stroke="#fff" stroke-width="7"/>
<path d="M41 11L65 38M65 11L41 38" stroke="#c2c2c2" stroke-width="2.400"/></svg>
<span class="t" style="left:2687.67px;top:273.99px;font-size:26px;line-height:32px;color:#1f1f1f;transform:scaleX(1.0151);">Delete</span>
<svg class="i" style="left:2716.4px;top:317.7px;" width="17" height="12" viewBox="0 0 17 12"><path d="M3.2 3.2 L8.5 8.8 L13.8 3.2" fill="none" stroke="#2b2b2b" stroke-width="2.6" stroke-linecap="round" stroke-linejoin="round"/></svg>
<svg class="i" style="left:2793px;top:188px;" width="66" height="66" viewBox="0 0 66 66"><path d="M14 6.200H49M14 2.700V9.700M49 2.700V9.700" stroke="#2e86d0" stroke-width="2.200"/>
<rect x="1.500" y="15.500" width="61.500" height="47" fill="#fafafa" stroke="#3b3b3b" stroke-width="2.600"/>
<rect x="17" y="31" width="30" height="16" fill="#82b7ea" stroke="#2e7bd0" stroke-width="2.200"/>
<path d="M1 31H17M47 31H63M1 47H17M47 47H63M17 15V31M47 15V31M17 47V63M47 47V63" stroke="#3b3b3b" stroke-width="2.200"/></svg>
<span class="t" style="left:2782.95px;top:271.29px;font-size:26px;line-height:32px;color:#1f1f1f;transform:scaleX(1.0247);">Format</span>
<svg class="i" style="left:2815px;top:315px;" width="17" height="12" viewBox="0 0 17 12"><path d="M3.2 3.2 L8.5 8.8 L13.8 3.2" fill="none" stroke="#2b2b2b" stroke-width="2.6" stroke-linecap="round" stroke-linejoin="round"/></svg>
<span class="t" style="left:2700px;top:364.73px;font-size:23px;line-height:29px;color:#1f1f1f;">Cells</span>
<svg class="i" style="left:2922px;top:195px;" width="30" height="33" viewBox="0 0 30 33"><path d="M26.500 7V1.500H2L14.500 16 2 30.500H26.500V25" fill="none" stroke="#a8a8a8" stroke-width="2.300" stroke-linejoin="round"/></svg>
<span class="t" style="left:2965px;top:196.29px;font-size:26px;line-height:32px;color:#b9b9b9;transform:scaleX(1.0162);">AutoSum</span>
<svg class="i" style="left:3101px;top:205px;" width="17" height="12.6" viewBox="0 0 17 12.6"><path d="M3.2 3.2 L8.5 9.4 L13.8 3.2" fill="none" stroke="#bdbdbd" stroke-width="2.2" stroke-linecap="round" stroke-linejoin="round"/></svg>
<svg class="i" style="left:2918px;top:253px;" width="37" height="33" viewBox="0 0 37 33"><rect x="1.300" y="1.300" width="33.500" height="29.500" fill="#fafafa" stroke="#3b3b3b" stroke-width="2.400"/>
<path d="M1 6.500H35" stroke="#3b3b3b" stroke-width="2.200"/>
<path d="M18 10.500V25M11.500 18.500L18 25 24.500 18.500" fill="none" stroke="#2e86d0" stroke-width="2.200"/></svg>
<span class="t" style="left:2962.95px;top:254.79px;font-size:26px;line-height:32px;color:#1f1f1f;transform:scaleX(1.0267);">Fill</span>
<svg class="i" style="left:3003px;top:262.6px;" width="17" height="12" viewBox="0 0 17 12"><path d="M3.2 3.2 L8.5 8.8 L13.8 3.2" fill="none" stroke="#2b2b2b" stroke-width="2.4" stroke-linecap="round" stroke-linejoin="round"/></svg>
<svg class="i" style="left:2917px;top:309px;" width="37" height="36" viewBox="0 0 37 36"><path d="M20 2.500L34 16.500 16 34 2.500 20.500z" fill="#f4f4f4" stroke="#bdbdbd" stroke-width="2.200" stroke-linejoin="round"/>
<path d="M10.500 12.500L24 26 16 34 2.500 20.500z" fill="#cdcdcd" stroke="#bdbdbd" stroke-width="2.200" stroke-linejoin="round"/></svg>
<span class="t" style="left:2963.61px;top:311.99px;font-size:26px;line-height:32px;color:#b9b9b9;transform:scaleX(0.9902);">Clear</span>
<svg class="i" style="left:3030.7px;top:320.7px;" width="16.3" height="12.3" viewBox="0 0 16.3 12.3"><path d="M3.2 3.2 L8.15 9.1 L13.1 3.2" fill="none" stroke="#bdbdbd" stroke-width="2.2" stroke-linecap="round" stroke-linejoin="round"/></svg>
<span class="t" style="left:3153px;top:190.91px;font-size:32px;line-height:40px;color:#a8a8a8;transform:scaleX(0.9545);">A</span>
<span class="t" style="left:3151.89px;top:223.41px;font-size:32px;line-height:40px;color:#a8a8a8;transform:scaleX(1.1111);">Z</span>
<svg class="i" style="left:3176px;top:211px;" width="40" height="37" viewBox="0 0 40 37"><path d="M1.500 1.500H37L24.500 15.500V34.500H14.500V15.500z" fill="#f1f1f1" stroke="#a8a8a8" stroke-width="2.300" stroke-linejoin="round"/></svg>
<span class="t" style="left:3143.95px;top:270.39px;font-size:26px;line-height:32px;color:#b9b9b9;transform:scaleX(1.0535);">Sort &amp;</span>
<span class="t" style="left:3139.96px;top:306.39px;font-size:26px;line-height:32px;color:#b9b9b9;transform:scaleX(1.0179);">Filter</span>
<svg class="i" style="left:3205px;top:315.4px;" width="17" height="11.4" viewBox="0 0 17 11.4"><path d="M3.2 3.2 L8.5 8.2 L13.8 3.2" fill="none" stroke="#bdbdbd" stroke-width="2.2" stroke-linecap="round" stroke-linejoin="round"/></svg>
<svg class="i" style="left:3252px;top:194px;" width="68" height="68" viewBox="0 0 68 68"><circle cx="43.500" cy="24.500" r="22" fill="#fafafa" stroke="#3b3b3b" stroke-width="2.300"/><path d="M27.500 40.500L2 66" stroke="#3b3b3b" stroke-width="2.600"/></svg>
<span class="t" style="left:3245.84px;top:270.39px;font-size:26px;line-height:32px;color:#1f1f1f;transform:scaleX(1.0822);">Find &amp;</span>
<span class="t" style="left:3240.83px;top:306.39px;font-size:26px;line-height:32px;color:#1f1f1f;transform:scaleX(0.9694);">Select</span>
<svg class="i" style="left:3316.6px;top:315.4px;" width="17.4" height="12" viewBox="0 0 17.4 12"><path d="M3.2 3.2 L8.7 8.8 L14.2 3.2" fill="none" stroke="#2b2b2b" stroke-width="2.6" stroke-linecap="round" stroke-linejoin="round"/></svg>
<span class="t" style="left:3086.55px;top:364.73px;font-size:23px;line-height:29px;color:#1f1f1f;transform:scaleX(1.0493);">Editing</span>
<svg class="i" style="left:3392px;top:190px;" width="74" height="74" viewBox="0 0 74 74"><rect x="1.500" y="1.500" width="70" height="70" fill="#f1f1f1" stroke="#3b3b3b" stroke-width="2.600"/>
<rect x="2.500" y="2.500" width="68" height="8.500" fill="#c8c8c8"/><path d="M1 11.500H72" stroke="#3b3b3b" stroke-width="2.200"/>
<path d="M1 32H72M1 52H72M24.500 52V72M48 52V72" stroke="#4a4a4a" stroke-width="2"/>
<circle cx="33.500" cy="31" r="22.500" fill="#fff" stroke="#3b3b3b" stroke-width="2.400"/>
<rect x="21" y="27" width="8" height="12.500" fill="#c8c8c8" stroke="#8a8a8a" stroke-width="1.600"/>
<rect x="29.500" y="17" width="8" height="22.500" fill="#c8c8c8" stroke="#3b3b3b" stroke-width="1.800"/>
<rect x="38" y="22" width="8" height="17.500" fill="#5ea5e8" stroke="#2e7bd0" stroke-width="1.800"/>
<path d="M49.500 47L72 71" stroke="#3b3b3b" stroke-width="3"/></svg>
<span class="t" style="left:3385px;top:270.39px;font-size:26px;line-height:32px;color:#1f1f1f;transform:scaleX(0.9783);">Analyze</span>
<span class="t" style="left:3400.69px;top:306.39px;font-size:26px;line-height:32px;color:#1f1f1f;transform:scaleX(1.0057);">Data</span>
<span class="t" style="left:3386.8px;top:364.73px;font-size:23px;line-height:29px;color:#1f1f1f;transform:scaleX(0.9788);">Analysis</span>
<svg class="i" style="left:3776.7px;top:361.5px;" width="25.3" height="15" viewBox="0 0 25.3 15"><path d="M3.2 3.2 L12.65 11.8 L22.1 3.2" fill="none" stroke="#2b2b2b" stroke-width="2.4" stroke-linecap="round" stroke-linejoin="round"/></svg>
<div style="left:18.4px;top:418px;width:226.2px;height:49px;background:#fff;border:1.5px solid #d8d8d8;border-radius:9px;"></div>
<svg class="i" style="left:210px;top:436.5px;" width="25" height="15" viewBox="0 0 25 15"><path d="M3.2 3.2 L12.5 11.8 L21.8 3.2" fill="none" stroke="#2b2b2b" stroke-width="2.4" stroke-linecap="round" stroke-linejoin="round"/></svg>
<div style="left:265px;top:431px;width:5px;height:5px;background:#a3a3a3;"></div>
<div style="left:265px;top:440px;width:5px;height:5px;background:#a3a3a3;"></div>
<div style="left:265px;top:449px;width:5px;height:5px;background:#a3a3a3;"></div>
<div style="left:290.7px;top:418px;width:162.5px;height:49px;background:#fff;border:1.5px solid #d8d8d8;border-radius:9px;"></div>
<svg class="i" style="left:304px;top:430px;" width="28" height="25" viewBox="0 0 28 25"><path d="M1.5 1.5L26 23.500M26 1.5L1.5 23.5" stroke="#b5b5b5" stroke-width="2.6" stroke-linecap="round"/></svg>
<svg class="i" style="left:353px;top:430px;" width="38" height="25" viewBox="0 0 38 25"><path d="M1.500 13.500L11.500 23.5L36 1.5" fill="none" stroke="#b5b5b5" stroke-width="2.6" stroke-linecap="round" stroke-linejoin="round"/></svg>
<span class="t" style="left:412.5px;top:416.38px;font-size:37px;line-height:46px;font-weight:700;font-style:italic;color:#333;font-family:'Liberation Serif',serif;">f</span>
<span class="t" style="left:430.5px;top:424.5px;font-size:30px;line-height:38px;font-weight:700;font-style:italic;color:#333;font-family:'Liberation Serif',serif;">x</span>
<div style="left:463.6px;top:418px;width:3357.4px;height:49px;background:#fff;border:1.5px solid #d8d8d8;border-radius:9px;"></div>
<svg class="i" style="left:3789px;top:433.5px;" width="25" height="15" viewBox="0 0 25 15"><path d="M3.2 3.2 L12.5 11.8 L21.8 3.2" fill="none" stroke="#8a8a8a" stroke-width="2.2" stroke-linecap="round" stroke-linejoin="round"/></svg>
<div style="left:62px;top:525px;width:3735.5px;height:1430.5px;background:#fff;"></div>
<div style="left:0px;top:481px;width:3800px;height:44px;background:#efefef;"></div>
<div style="left:61px;top:523.6px;width:3737px;height:1.6px;background:#c8c8c8;"></div>
<div style="left:13px;top:524px;width:48px;height:1.2px;background:#e2e2e2;"></div>
<svg class="i" style="left:22px;top:486px;" width="37" height="35" viewBox="0 0 37 35"><path d="M36 0.500V34H1z" fill="#e0e0e0"/></svg>
<span class="t" style="left:77.5px;top:485.9px;font-size:30px;line-height:38px;color:#404040;">A</span>
<div style="left:110.4px;top:491px;width:1.3px;height:33px;background:#e1e1e1;"></div>
<span class="t" style="left:197.75px;top:485.9px;font-size:30px;line-height:38px;color:#404040;">B</span>
<div style="left:302.9px;top:491px;width:1.3px;height:33px;background:#e1e1e1;"></div>
<span class="t" style="left:397.25px;top:485.9px;font-size:30px;line-height:38px;color:#404040;">C</span>
<div style="left:510.4px;top:491px;width:1.3px;height:33px;background:#e1e1e1;"></div>
<span class="t" style="left:558.25px;top:485.9px;font-size:30px;line-height:38px;color:#404040;">D</span>
<div style="left:625.9px;top:491px;width:1.3px;height:33px;background:#e1e1e1;"></div>
<span class="t" style="left:679.5px;top:485.9px;font-size:30px;line-height:38px;color:#404040;">E</span>
<div style="left:750.9px;top:491px;width:1.3px;height:33px;background:#e1e1e1;"></div>
<span class="t" style="left:805px;top:485.9px;font-size:30px;line-height:38px;color:#404040;">F</span>
<div style="left:875.9px;top:491px;width:1.3px;height:33px;background:#e1e1e1;"></div>
<span class="t" style="left:1014.75px;top:485.9px;font-size:30px;line-height:38px;color:#404040;">G</span>
<div style="left:1173.4px;top:491px;width:1.3px;height:33px;background:#e1e1e1;"></div>
<span class="t" style="left:1193px;top:485.9px;font-size:30px;line-height:38px;color:#404040;">H</span>
<div style="left:1231.4px;top:491px;width:1.3px;height:33px;background:#e1e1e1;"></div>
<span class="t" style="left:1315.25px;top:485.9px;font-size:30px;line-height:38px;color:#404040;">I</span>
<div style="left:1403.9px;top:491px;width:1.3px;height:33px;background:#e1e1e1;"></div>
<span class="t" style="left:1579px;top:485.9px;font-size:30px;line-height:38px;color:#404040;">J</span>
<div style="left:1763.9px;top:491px;width:1.3px;height:33px;background:#e1e1e1;"></div>
<span class="t" style="left:1864.5px;top:485.9px;font-size:30px;line-height:38px;color:#404040;">K</span>
<div style="left:1983.9px;top:491px;width:1.3px;height:33px;background:#e1e1e1;"></div>
<span class="t" style="left:2092.25px;top:485.9px;font-size:30px;line-height:38px;color:#404040;">L</span>
<div style="left:2215.4px;top:491px;width:1.3px;height:33px;background:#e1e1e1;"></div>
<span class="t" style="left:2315.75px;top:485.9px;font-size:30px;line-height:38px;color:#404040;">M</span>
<div style="left:2437.9px;top:491px;width:1.3px;height:33px;background:#e1e1e1;"></div>
<span class="t" style="left:2534.25px;top:485.9px;font-size:30px;line-height:38px;color:#404040;">N</span>
<div style="left:2649.4px;top:491px;width:1.3px;height:33px;background:#e1e1e1;"></div>
<span class="t" style="left:2715.25px;top:485.9px;font-size:30px;line-height:38px;color:#404040;">O</span>
<div style="left:2800.9px;top:491px;width:1.3px;height:33px;background:#e1e1e1;"></div>
<span class="t" style="left:2868px;top:485.9px;font-size:30px;line-height:38px;color:#404040;">P</span>
<div style="left:2952.9px;top:491px;width:1.3px;height:33px;background:#e1e1e1;"></div>
<span class="t" style="left:3019px;top:485.9px;font-size:30px;line-height:38px;color:#404040;">Q</span>
<div style="left:3104.9px;top:491px;width:1.3px;height:33px;background:#e1e1e1;"></div>
<span class="t" style="left:3171px;top:485.9px;font-size:30px;line-height:38px;color:#404040;">R</span>
<div style="left:3256.9px;top:491px;width:1.3px;height:33px;background:#e1e1e1;"></div>
<span class="t" style="left:3324.6px;top:485.9px;font-size:30px;line-height:38px;color:#404040;">S</span>
<div style="left:3409.1px;top:491px;width:1.3px;height:33px;background:#e1e1e1;"></div>
<span class="t" style="left:3477.7px;top:485.9px;font-size:30px;line-height:38px;color:#404040;">T</span>
<div style="left:3561.1px;top:491px;width:1.3px;height:33px;background:#e1e1e1;"></div>
<span class="t" style="left:3627.6px;top:485.9px;font-size:30px;line-height:38px;color:#404040;">U</span>
<div style="left:3712.9px;top:491px;width:1.3px;height:33px;background:#e1e1e1;"></div>
<span class="t" style="left:3780.5px;top:485.9px;font-size:30px;line-height:38px;color:#404040;">V</span>
<div style="left:0px;top:525px;width:62px;height:1431px;background:#efefef;"></div>
<div style="left:61px;top:525px;width:1.3px;height:1431px;background:#c8c8c8;"></div>
<div style="left:13px;top:567.2px;width:48px;height:1.3px;background:#dcdcdc;"></div>
<span class="t" style="left:23px;top:528.9px;font-size:30px;line-height:38px;color:#404040;">1</span>
<div style="left:13px;top:610.2px;width:48px;height:1.3px;background:#dcdcdc;"></div>
<span class="t" style="left:23.5px;top:571.9px;font-size:30px;line-height:38px;color:#404040;">2</span>
<div style="left:13px;top:653.2px;width:48px;height:1.3px;background:#dcdcdc;"></div>
<span class="t" style="left:23.5px;top:614.9px;font-size:30px;line-height:38px;color:#404040;">3</span>
<div style="left:13px;top:696.2px;width:48px;height:1.3px;background:#dcdcdc;"></div>
<span class="t" style="left:24px;top:657.9px;font-size:30px;line-height:38px;color:#404040;">4</span>
<div style="left:13px;top:739.2px;width:48px;height:1.3px;background:#dcdcdc;"></div>
<span class="t" style="left:23.5px;top:700.9px;font-size:30px;line-height:38px;color:#404040;">5</span>
<div style="left:13px;top:782.2px;width:48px;height:1.3px;background:#dcdcdc;"></div>
<span class="t" style="left:23.5px;top:743.9px;font-size:30px;line-height:38px;color:#404040;">6</span>
<div style="left:13px;top:825.2px;width:48px;height:1.3px;background:#dcdcdc;"></div>
<span class="t" style="left:23.5px;top:786.9px;font-size:30px;line-height:38px;color:#404040;">7</span>
<div style="left:13px;top:868.2px;width:48px;height:1.3px;background:#dcdcdc;"></div>
<span class="t" style="left:23.5px;top:829.9px;font-size:30px;line-height:38px;color:#404040;">8</span>
<div style="left:13px;top:911.2px;width:48px;height:1.3px;background:#dcdcdc;"></div>
<span class="t" style="left:23.5px;top:872.9px;font-size:30px;line-height:38px;color:#404040;">9</span>
<div style="left:13px;top:954.2px;width:48px;height:1.3px;background:#dcdcdc;"></div>
<span class="t" style="left:14.5px;top:915.9px;font-size:30px;line-height:38px;color:#404040;">10</span>
<div style="left:13px;top:997.2px;width:48px;height:1.3px;background:#dcdcdc;"></div>
<span class="t" style="left:16px;top:958.9px;font-size:30px;line-height:38px;color:#404040;">11</span>
<div style="left:13px;top:1040.2px;width:48px;height:1.3px;background:#dcdcdc;"></div>
<span class="t" style="left:14.5px;top:1001.9px;font-size:30px;line-height:38px;color:#404040;">12</span>
<div style="left:13px;top:1083.2px;width:48px;height:1.3px;background:#dcdcdc;"></div>
<span class="t" style="left:14.5px;top:1044.9px;font-size:30px;line-height:38px;color:#404040;">13</span>
<div style="left:13px;top:1126.2px;width:48px;height:1.3px;background:#dcdcdc;"></div>
<span class="t" style="left:14.5px;top:1087.9px;font-size:30px;line-height:38px;color:#404040;">14</span>
<div style="left:13px;top:1169.2px;width:48px;height:1.3px;background:#dcdcdc;"></div>
<span class="t" style="left:14.5px;top:1130.9px;font-size:30px;line-height:38px;color:#404040;">15</span>
<div style="left:13px;top:1212.2px;width:48px;height:1.3px;background:#dcdcdc;"></div>
<span class="t" style="left:14.5px;top:1173.9px;font-size:30px;line-height:38px;color:#404040;">16</span>
<div style="left:13px;top:1255.2px;width:48px;height:1.3px;background:#dcdcdc;"></div>
<span class="t" style="left:14.5px;top:1216.9px;font-size:30px;line-height:38px;color:#404040;">17</span>
<div style="left:13px;top:1298.2px;width:48px;height:1.3px;background:#dcdcdc;"></div>
<span class="t" style="left:14.5px;top:1259.9px;font-size:30px;line-height:38px;color:#404040;">18</span>
<div style="left:13px;top:1341.2px;width:48px;height:1.3px;background:#dcdcdc;"></div>
<span class="t" style="left:14.5px;top:1302.9px;font-size:30px;line-height:38px;color:#404040;">19</span>
<div style="left:13px;top:1384.2px;width:48px;height:1.3px;background:#dcdcdc;"></div>
<span class="t" style="left:15px;top:1345.9px;font-size:30px;line-height:38px;color:#404040;">20</span>
<div style="left:13px;top:1427.2px;width:48px;height:1.3px;background:#dcdcdc;"></div>
<span class="t" style="left:15px;top:1388.9px;font-size:30px;line-height:38px;color:#404040;">21</span>
<div style="left:13px;top:1470.2px;width:48px;height:1.3px;background:#dcdcdc;"></div>
<span class="t" style="left:15px;top:1431.9px;font-size:30px;line-height:38px;color:#404040;">22</span>
<div style="left:13px;top:1513.2px;width:48px;height:1.3px;background:#dcdcdc;"></div>
<span class="t" style="left:15px;top:1474.9px;font-size:30px;line-height:38px;color:#404040;">23</span>
<div style="left:13px;top:1556.2px;width:48px;height:1.3px;background:#dcdcdc;"></div>
<span class="t" style="left:15px;top:1517.9px;font-size:30px;line-height:38px;color:#404040;">24</span>
<div style="left:13px;top:1599.2px;width:48px;height:1.3px;background:#dcdcdc;"></div>
<span class="t" style="left:15px;top:1560.9px;font-size:30px;line-height:38px;color:#404040;">25</span>
<div style="left:13px;top:1642.2px;width:48px;height:1.3px;background:#dcdcdc;"></div>
<span class="t" style="left:15px;top:1603.9px;font-size:30px;line-height:38px;color:#404040;">26</span>
<div style="left:13px;top:1685.2px;width:48px;height:1.3px;background:#dcdcdc;"></div>
<span class="t" style="left:15px;top:1646.9px;font-size:30px;line-height:38px;color:#404040;">27</span>
<div style="left:13px;top:1728.2px;width:48px;height:1.3px;background:#dcdcdc;"></div>
<span class="t" style="left:15px;top:1689.9px;font-size:30px;line-height:38px;color:#404040;">28</span>
<div style="left:13px;top:1771.2px;width:48px;height:1.3px;background:#dcdcdc;"></div>
<span class="t" style="left:15px;top:1732.9px;font-size:30px;line-height:38px;color:#404040;">29</span>
<div style="left:13px;top:1814.2px;width:48px;height:1.3px;background:#dcdcdc;"></div>
<span class="t" style="left:15px;top:1775.9px;font-size:30px;line-height:38px;color:#404040;">30</span>
<div style="left:13px;top:1857.2px;width:48px;height:1.3px;background:#dcdcdc;"></div>
<span class="t" style="left:15px;top:1818.9px;font-size:30px;line-height:38px;color:#404040;">31</span>
<div style="left:13px;top:1900.2px;width:48px;height:1.3px;background:#dcdcdc;"></div>
<span class="t" style="left:15px;top:1861.9px;font-size:30px;line-height:38px;color:#404040;">32</span>
<div style="left:13px;top:1943.2px;width:48px;height:1.3px;background:#dcdcdc;"></div>
<span class="t" style="left:15px;top:1904.9px;font-size:30px;line-height:38px;color:#404040;">33</span>
<div style="left:3797.5px;top:481px;width:40.5px;height:1475px;background:#f3f3f3;"></div>
<div style="left:3797px;top:525px;width:1.3px;height:1431px;background:#c8c8c8;"></div>
<div style="left:3810px;top:520px;width:18px;height:1357px;background:#6f6f6f;border-radius:9px;"></div>
<svg class="i" style="left:3809px;top:494px;" width="20" height="15" viewBox="0 0 20 15"><path d="M2 14.500h16a1.5 1.5 0 0 0 1.2-2.4L11.300 1.2a1.6 1.6 0 0 0-2.600 0L0.800 12.100A1.500 1.500 0 0 0 2 14.500z" fill="#6f6f6f"/></svg>
<svg class="i" style="left:3809px;top:1932px;" width="20" height="15" viewBox="0 0 20 15"><path d="M2 0.500h16a1.500 1.500 0 0 1 1.200 2.400L11.300 13.800a1.600 1.600 0 0 1-2.600 0L0.800 2.900A1.500 1.500 0 0 1 2 0.500z" fill="#6f6f6f"/></svg>
<div style="left:107.4px;top:566.9px;width:397.6px;height:72.8px;background:#6d6d6d;"></div>
<div style="left:107.4px;top:566.9px;width:393.6px;height:68.1px;background:#fff;"></div>
<div style="left:110.4px;top:570.4px;width:390.6px;height:64.6px;background:#efefef;border:1.5px solid #e2e2e2;border-right-color:#a9a9a9;border-bottom-color:#a9a9a9;"></div>
<span class="t" style="left:125.94px;top:585.52px;font-size:28.5px;line-height:36px;color:#000;transform:scaleX(1.0578);">Select Mathcad Worksheet</span>
<div style="left:539px;top:565.5px;width:402.6px;height:71.2px;background:#6d6d6d;"></div>
<div style="left:539px;top:565.5px;width:398.6px;height:66.5px;background:#fff;"></div>
<div style="left:542px;top:569px;width:395.6px;height:63px;background:#efefef;border:1.5px solid #e2e2e2;border-right-color:#a9a9a9;border-bottom-color:#a9a9a9;"></div>
<span class="t" style="left:566.89px;top:584.82px;font-size:28.5px;line-height:36px;color:#000;transform:scaleX(1.0544);">Read Mathcad Worksheet</span>
<div style="left:977px;top:565px;width:161.8px;height:71.3px;background:#6d6d6d;"></div>
<div style="left:977px;top:565px;width:157.8px;height:66.6px;background:#fff;"></div>
<div style="left:980px;top:568.5px;width:154.8px;height:63.1px;background:#efefef;border:1.5px solid #e2e2e2;border-right-color:#a9a9a9;border-bottom-color:#a9a9a9;"></div>
<span class="t" style="left:1012.14px;top:584.12px;font-size:28.5px;line-height:36px;color:#12b012;transform:scaleX(1.1321);">Iterate</span>
<div style="left:1171px;top:563.5px;width:261px;height:72.2px;background:#6d6d6d;"></div>
<div style="left:1171px;top:563.5px;width:257px;height:67.5px;background:#fff;"></div>
<div style="left:1174px;top:567px;width:254px;height:64px;background:#efefef;border:1.5px solid #e2e2e2;border-right-color:#a9a9a9;border-bottom-color:#a9a9a9;"></div>
<span class="t" style="left:1208.45px;top:583.12px;font-size:28.5px;line-height:36px;color:#000;transform:scaleX(1.0486);">Clear Outputs</span>
<div style="left:1465px;top:563.5px;width:137px;height:72.2px;background:#6d6d6d;"></div>
<div style="left:1465px;top:563.5px;width:133px;height:67.5px;background:#fff;"></div>
<div style="left:1468px;top:567px;width:130px;height:64px;background:#efefef;border:1.5px solid #e2e2e2;border-right-color:#a9a9a9;border-bottom-color:#a9a9a9;"></div>
<span class="t" style="left:1496.03px;top:583.12px;font-size:28.5px;line-height:36px;color:#f00000;transform:scaleX(0.9863);">Reset</span>
<span class="t" style="left:109.42px;top:668.88px;font-size:29.5px;line-height:37px;font-weight:700;color:#000;transform:scaleX(0.99);">Path:</span>
<span class="t" style="left:204.67px;top:668.88px;font-size:29.5px;line-height:37px;color:#9aa3a8;transform:scaleX(1.0293);">C:\Users\</span>
<span class="t" style="left:403.5px;top:668.88px;font-size:29.5px;line-height:37px;color:#9aa3a8;transform:scaleX(1.0274);">\OneDrive\Desktop\Mathcad Excel Iterator Rev A\Example Worksheet.mcdx</span>
<span class="t" style="left:116.79px;top:744.88px;font-size:29.5px;line-height:37px;font-weight:700;color:#000;">Mathcad Default Inputs</span>
<span class="t" style="left:116.8px;top:1088.88px;font-size:29.5px;line-height:37px;font-weight:700;color:#000;">Mathcad Default Outputs</span>
<span class="t" style="left:1237.97px;top:744.88px;font-size:29.5px;line-height:37px;font-weight:700;color:#000;transform:scaleX(1.0137);">Iteration Table</span>
<div style="left:111px;top:782px;width:1063px;height:44px;background:#70ad47;"></div>
<span class="t" style="left:118.8px;top:788.48px;font-size:29.5px;line-height:37px;font-weight:700;color:#fff;transform:scaleX(0.9086);">Alias</span>
<span class="t" style="left:369.75px;top:788.48px;font-size:29.5px;line-height:37px;font-weight:700;color:#fff;">Value</span>
<span class="t" style="left:532.75px;top:788.48px;font-size:29.5px;line-height:37px;font-weight:700;color:#fff;">Units</span>
<span class="t" style="left:645.82px;top:788.48px;font-size:29.5px;line-height:37px;font-weight:700;color:#fff;transform:scaleX(0.9798);">Units2</span>
<span class="t" style="left:758.86px;top:788.48px;font-size:29.5px;line-height:37px;font-weight:700;color:#fff;transform:scaleX(0.9688);">Enabled</span>
<span class="t" style="left:883.6px;top:788.48px;font-size:29.5px;line-height:37px;font-weight:700;color:#fff;transform:scaleX(0.9322);">Status</span>
<div style="left:111px;top:826px;width:515.5px;height:215px;background:#f2f2f2;"></div>
<div style="left:626.5px;top:826px;width:250px;height:215px;background:#ffcc99;"></div>
<div style="left:1173px;top:826px;width:1px;height:216px;background:#70ad47;"></div>
<div style="left:877px;top:869px;width:297px;height:1px;background:#70ad47;"></div>
<div style="left:877px;top:912px;width:297px;height:1px;background:#70ad47;"></div>
<div style="left:877px;top:955px;width:297px;height:1px;background:#70ad47;"></div>
<div style="left:877px;top:998px;width:297px;height:1px;background:#70ad47;"></div>
<div style="left:877px;top:1041px;width:297px;height:1px;background:#70ad47;"></div>
<div style="left:626px;top:826px;width:251px;height:1px;background:#7f7f7f;"></div>
<div style="left:626px;top:869px;width:251px;height:1px;background:#7f7f7f;"></div>
<div style="left:626px;top:912px;width:251px;height:1px;background:#7f7f7f;"></div>
<div style="left:626px;top:955px;width:251px;height:1px;background:#7f7f7f;"></div>
<div style="left:626px;top:998px;width:251px;height:1px;background:#7f7f7f;"></div>
<div style="left:626px;top:1041px;width:251px;height:1px;background:#7f7f7f;"></div>
<div style="left:751px;top:826px;width:1px;height:216px;background:#7f7f7f;"></div>
<div style="left:876px;top:826px;width:1px;height:216px;background:#7f7f7f;"></div>
<div style="left:111px;top:826px;width:516px;height:1px;background:#3f3f3f;"></div>
<div style="left:111px;top:869px;width:516px;height:1px;background:#3f3f3f;"></div>
<div style="left:111px;top:912px;width:516px;height:1px;background:#3f3f3f;"></div>
<div style="left:111px;top:955px;width:516px;height:1px;background:#3f3f3f;"></div>
<div style="left:111px;top:998px;width:516px;height:1px;background:#3f3f3f;"></div>
<div style="left:111px;top:1041px;width:516px;height:1px;background:#3f3f3f;"></div>
<div style="left:111px;top:826px;width:1px;height:216px;background:#3f3f3f;"></div>
<div style="left:303px;top:826px;width:1px;height:216px;background:#3f3f3f;"></div>
<div style="left:511px;top:826px;width:1px;height:216px;background:#3f3f3f;"></div>
<div style="left:626px;top:826px;width:1px;height:216px;background:#3f3f3f;"></div>
<svg class="i" style="left:1163px;top:1030.5px;" width="11" height="11" viewBox="0 0 11 11"><path d="M11 0v11H0V6.500h6.500V0z" fill="#3f55b5"/></svg>
<span class="t" style="left:118.19px;top:831.48px;font-size:29.5px;line-height:37px;font-weight:700;color:#3f3f3f;transform:scaleX(0.9043);">F_z</span>
<span class="t" style="left:343.95px;top:831.48px;font-size:29.5px;line-height:37px;font-weight:700;color:#3f3f3f;letter-spacing:0.8px;">81534.00</span>
<span class="t" style="left:549.45px;top:831.48px;font-size:29.5px;line-height:37px;font-weight:700;color:#3f3f3f;letter-spacing:0.8px;">lbf</span>
<span class="t" style="left:669.75px;top:831.48px;font-size:29.5px;line-height:37px;color:#3f3f76;letter-spacing:0.75px;">kip</span>
<span class="t" style="left:806px;top:831.48px;font-size:29.5px;line-height:37px;color:#3f3f76;letter-spacing:0.75px;">1</span>
<span class="t" style="left:119.08px;top:874.48px;font-size:29.5px;line-height:37px;font-weight:700;color:#3f3f3f;transform:scaleX(0.915);">Ωy</span>
<span class="t" style="left:378.05px;top:874.48px;font-size:29.5px;line-height:37px;font-weight:700;color:#3f3f3f;letter-spacing:0.8px;">2.00</span>
<span class="t" style="left:118.11px;top:917.48px;font-size:29.5px;line-height:37px;font-weight:700;color:#3f3f3f;transform:scaleX(0.9442);">Fty</span>
<span class="t" style="left:343.45px;top:917.48px;font-size:29.5px;line-height:37px;font-weight:700;color:#3f3f3f;letter-spacing:0.8px;">65000.00</span>
<span class="t" style="left:547.45px;top:917.48px;font-size:29.5px;line-height:37px;font-weight:700;color:#3f3f3f;letter-spacing:0.8px;">psi</span>
<span class="t" style="left:120px;top:960.48px;font-size:29.5px;line-height:37px;font-weight:700;color:#3f3f3f;">a</span>
<span class="t" style="left:378.05px;top:960.48px;font-size:29.5px;line-height:37px;font-weight:700;color:#3f3f3f;letter-spacing:0.8px;">0.33</span>
<span class="t" style="left:559.35px;top:960.48px;font-size:29.5px;line-height:37px;font-weight:700;color:#3f3f3f;letter-spacing:0.8px;">ft</span>
<span class="t" style="left:677.62px;top:960.48px;font-size:29.5px;line-height:37px;color:#3f3f76;letter-spacing:0.75px;">in</span>
<span class="t" style="left:806px;top:960.48px;font-size:29.5px;line-height:37px;color:#3f3f76;letter-spacing:0.75px;">1</span>
<span class="t" style="left:118px;top:1003.48px;font-size:29.5px;line-height:37px;font-weight:700;color:#3f3f3f;">b</span>
<span class="t" style="left:378.05px;top:1003.48px;font-size:29.5px;line-height:37px;font-weight:700;color:#3f3f3f;letter-spacing:0.8px;">0.25</span>
<span class="t" style="left:559.35px;top:1003.48px;font-size:29.5px;line-height:37px;font-weight:700;color:#3f3f3f;letter-spacing:0.8px;">ft</span>
<div style="left:111px;top:1126px;width:1063px;height:44px;background:#5b9bd5;"></div>
<span class="t" style="left:118.8px;top:1132.48px;font-size:29.5px;line-height:37px;font-weight:700;color:#fff;transform:scaleX(0.9086);">Alias</span>
<span class="t" style="left:369.75px;top:1132.48px;font-size:29.5px;line-height:37px;font-weight:700;color:#fff;">Value</span>
<span class="t" style="left:532.75px;top:1132.48px;font-size:29.5px;line-height:37px;font-weight:700;color:#fff;">Units</span>
<span class="t" style="left:645.82px;top:1132.48px;font-size:29.5px;line-height:37px;font-weight:700;color:#fff;transform:scaleX(0.9798);">Units2</span>
<span class="t" style="left:758.86px;top:1132.48px;font-size:29.5px;line-height:37px;font-weight:700;color:#fff;transform:scaleX(0.9688);">Enabled</span>
<span class="t" style="left:883.6px;top:1132.48px;font-size:29.5px;line-height:37px;font-weight:700;color:#fff;transform:scaleX(0.9322);">Status</span>
<div style="left:111px;top:1170px;width:515.5px;height:86px;background:#f2f2f2;"></div>
<div style="left:626.5px;top:1170px;width:250px;height:86px;background:#ffcc99;"></div>
<div style="left:1173px;top:1170px;width:1px;height:87px;background:#5b9bd5;"></div>
<div style="left:877px;top:1213px;width:297px;height:1px;background:#5b9bd5;"></div>
<div style="left:877px;top:1256px;width:297px;height:1px;background:#5b9bd5;"></div>
<div style="left:626px;top:1170px;width:251px;height:1px;background:#7f7f7f;"></div>
<div style="left:626px;top:1213px;width:251px;height:1px;background:#7f7f7f;"></div>
<div style="left:626px;top:1256px;width:251px;height:1px;background:#7f7f7f;"></div>
<div style="left:751px;top:1170px;width:1px;height:87px;background:#7f7f7f;"></div>
<div style="left:876px;top:1170px;width:1px;height:87px;background:#7f7f7f;"></div>
<div style="left:111px;top:1170px;width:516px;height:1px;background:#3f3f3f;"></div>
<div style="left:111px;top:1213px;width:516px;height:1px;background:#3f3f3f;"></div>
<div style="left:111px;top:1256px;width:516px;height:1px;background:#3f3f3f;"></div>
<div style="left:111px;top:1170px;width:1px;height:87px;background:#3f3f3f;"></div>
<div style="left:303px;top:1170px;width:1px;height:87px;background:#3f3f3f;"></div>
<div style="left:511px;top:1170px;width:1px;height:87px;background:#3f3f3f;"></div>
<div style="left:626px;top:1170px;width:1px;height:87px;background:#3f3f3f;"></div>
<svg class="i" style="left:1163px;top:1245.5px;" width="11" height="11" viewBox="0 0 11 11"><path d="M11 0v11H0V6.500h6.500V0z" fill="#3f55b5"/></svg>
<span class="t" style="left:119.08px;top:1175.48px;font-size:29.5px;line-height:37px;font-weight:700;color:#3f3f3f;transform:scaleX(0.9165);">sigma</span>
<span class="t" style="left:352.35px;top:1175.48px;font-size:29.5px;line-height:37px;font-weight:700;color:#3f3f3f;letter-spacing:0.8px;">6794.50</span>
<span class="t" style="left:547.45px;top:1175.48px;font-size:29.5px;line-height:37px;font-weight:700;color:#3f3f3f;letter-spacing:0.8px;">psi</span>
<span class="t" style="left:670.75px;top:1175.48px;font-size:29.5px;line-height:37px;color:#3f3f76;letter-spacing:0.75px;">psi</span>
<span class="t" style="left:806px;top:1175.48px;font-size:29.5px;line-height:37px;color:#3f3f76;letter-spacing:0.75px;">1</span>
<span class="t" style="left:118.04px;top:1218.48px;font-size:29.5px;line-height:37px;font-weight:700;color:#3f3f3f;transform:scaleX(0.9789);">MS_y</span>
<span class="t" style="left:378.55px;top:1218.48px;font-size:29.5px;line-height:37px;font-weight:700;color:#3f3f3f;letter-spacing:0.8px;">3.78</span>
<span class="t" style="left:806px;top:1218.48px;font-size:29.5px;line-height:37px;color:#3f3f76;letter-spacing:0.75px;">1</span>
<div style="left:1232px;top:782px;width:533px;height:44px;background:#000;"></div>
<div style="left:1764.5px;top:782px;width:452px;height:44px;background:#70ad47;"></div>
<div style="left:2215.5px;top:782px;width:434.5px;height:44px;background:#5b9bd5;"></div>
<span class="t" style="left:1303.75px;top:788.48px;font-size:29.5px;line-height:37px;font-weight:700;color:#fff;">ID</span>
<span class="t" style="left:1409.84px;top:788.48px;font-size:29.5px;line-height:37px;font-weight:700;color:#fff;transform:scaleX(0.9818);">Description</span>
<span class="t" style="left:1850.5px;top:788.48px;font-size:29.5px;line-height:37px;font-weight:700;color:#fff;">F_z</span>
<span class="t" style="left:2092.75px;top:788.48px;font-size:29.5px;line-height:37px;font-weight:700;color:#fff;">a</span>
<span class="t" style="left:2284.75px;top:788.48px;font-size:29.5px;line-height:37px;font-weight:700;color:#fff;">sigma</span>
<span class="t" style="left:2505.25px;top:788.48px;font-size:29.5px;line-height:37px;font-weight:700;color:#fff;">MS_y</span>
<div style="left:1232px;top:826px;width:532.5px;height:1075px;background:#ffffcc;"></div>
<div style="left:1764.5px;top:826px;width:451.5px;height:1075px;background:#ffcc99;"></div>
<div style="left:2215.5px;top:826px;width:434.5px;height:1075px;background:#f2f2f2;"></div>
<div style="left:1232px;top:826px;width:533px;height:1px;background:#b2b2b2;"></div>
<div style="left:1764px;top:826px;width:453px;height:1px;background:#7f7f7f;"></div>
<div style="left:2216px;top:826px;width:434px;height:1px;background:#3f3f3f;"></div>
<div style="left:1232px;top:869px;width:533px;height:1px;background:#b2b2b2;"></div>
<div style="left:1764px;top:869px;width:453px;height:1px;background:#7f7f7f;"></div>
<div style="left:2216px;top:869px;width:434px;height:1px;background:#3f3f3f;"></div>
<div style="left:1232px;top:912px;width:533px;height:1px;background:#b2b2b2;"></div>
<div style="left:1764px;top:912px;width:453px;height:1px;background:#7f7f7f;"></div>
<div style="left:2216px;top:912px;width:434px;height:1px;background:#3f3f3f;"></div>
<div style="left:1232px;top:955px;width:533px;height:1px;background:#b2b2b2;"></div>
<div style="left:1764px;top:955px;width:453px;height:1px;background:#7f7f7f;"></div>
<div style="left:2216px;top:955px;width:434px;height:1px;background:#3f3f3f;"></div>
<div style="left:1232px;top:998px;width:533px;height:1px;background:#b2b2b2;"></div>
<div style="left:1764px;top:998px;width:453px;height:1px;background:#7f7f7f;"></div>
<div style="left:2216px;top:998px;width:434px;height:1px;background:#3f3f3f;"></div>
<div style="left:1232px;top:1041px;width:533px;height:1px;background:#b2b2b2;"></div>
<div style="left:1764px;top:1041px;width:453px;height:1px;background:#7f7f7f;"></div>
<div style="left:2216px;top:1041px;width:434px;height:1px;background:#3f3f3f;"></div>
<div style="left:1232px;top:1084px;width:533px;height:1px;background:#b2b2b2;"></div>
<div style="left:1764px;top:1084px;width:453px;height:1px;background:#7f7f7f;"></div>
<div style="left:2216px;top:1084px;width:434px;height:1px;background:#3f3f3f;"></div>
<div style="left:1232px;top:1127px;width:533px;height:1px;background:#b2b2b2;"></div>
<div style="left:1764px;top:1127px;width:453px;height:1px;background:#7f7f7f;"></div>
<div style="left:2216px;top:1127px;width:434px;height:1px;background:#3f3f3f;"></div>
<div style="left:1232px;top:1170px;width:533px;height:1px;background:#b2b2b2;"></div>
<div style="left:1764px;top:1170px;width:453px;height:1px;background:#7f7f7f;"></div>
<div style="left:2216px;top:1170px;width:434px;height:1px;background:#3f3f3f;"></div>
<div style="left:1232px;top:1213px;width:533px;height:1px;background:#b2b2b2;"></div>
<div style="left:1764px;top:1213px;width:453px;height:1px;background:#7f7f7f;"></div>
<div style="left:2216px;top:1213px;width:434px;height:1px;background:#3f3f3f;"></div>
<div style="left:1232px;top:1256px;width:533px;height:1px;background:#b2b2b2;"></div>
<div style="left:1764px;top:1256px;width:453px;height:1px;background:#7f7f7f;"></div>
<div style="left:2216px;top:1256px;width:434px;height:1px;background:#3f3f3f;"></div>
<div style="left:1232px;top:1299px;width:533px;height:1px;background:#b2b2b2;"></div>
<div style="left:1764px;top:1299px;width:453px;height:1px;background:#7f7f7f;"></div>
<div style="left:2216px;top:1299px;width:434px;height:1px;background:#3f3f3f;"></div>
<div style="left:1232px;top:1342px;width:533px;height:1px;background:#b2b2b2;"></div>
<div style="left:1764px;top:1342px;width:453px;height:1px;background:#7f7f7f;"></div>
<div style="left:2216px;top:1342px;width:434px;height:1px;background:#3f3f3f;"></div>
<div style="left:1232px;top:1385px;width:533px;height:1px;background:#b2b2b2;"></div>
<div style="left:1764px;top:1385px;width:453px;height:1px;background:#7f7f7f;"></div>
<div style="left:2216px;top:1385px;width:434px;height:1px;background:#3f3f3f;"></div>
<div style="left:1232px;top:1428px;width:533px;height:1px;background:#b2b2b2;"></div>
<div style="left:1764px;top:1428px;width:453px;height:1px;background:#7f7f7f;"></div>
<div style="left:2216px;top:1428px;width:434px;height:1px;background:#3f3f3f;"></div>
<div style="left:1232px;top:1471px;width:533px;height:1px;background:#b2b2b2;"></div>
<div style="left:1764px;top:1471px;width:453px;height:1px;background:#7f7f7f;"></div>
<div style="left:2216px;top:1471px;width:434px;height:1px;background:#3f3f3f;"></div>
<div style="left:1232px;top:1514px;width:533px;height:1px;background:#b2b2b2;"></div>
<div style="left:1764px;top:1514px;width:453px;height:1px;background:#7f7f7f;"></div>
<div style="left:2216px;top:1514px;width:434px;height:1px;background:#3f3f3f;"></div>
<div style="left:1232px;top:1557px;width:533px;height:1px;background:#b2b2b2;"></div>
<div style="left:1764px;top:1557px;width:453px;height:1px;background:#7f7f7f;"></div>
<div style="left:2216px;top:1557px;width:434px;height:1px;background:#3f3f3f;"></div>
<div style="left:1232px;top:1600px;width:533px;height:1px;background:#b2b2b2;"></div>
<div style="left:1764px;top:1600px;width:453px;height:1px;background:#7f7f7f;"></div>
<div style="left:2216px;top:1600px;width:434px;height:1px;background:#3f3f3f;"></div>
<div style="left:1232px;top:1643px;width:533px;height:1px;background:#b2b2b2;"></div>
<div style="left:1764px;top:1643px;width:453px;height:1px;background:#7f7f7f;"></div>
<div style="left:2216px;top:1643px;width:434px;height:1px;background:#3f3f3f;"></div>
<div style="left:1232px;top:1686px;width:533px;height:1px;background:#b2b2b2;"></div>
<div style="left:1764px;top:1686px;width:453px;height:1px;background:#7f7f7f;"></div>
<div style="left:2216px;top:1686px;width:434px;height:1px;background:#3f3f3f;"></div>
<div style="left:1232px;top:1729px;width:533px;height:1px;background:#b2b2b2;"></div>
<div style="left:1764px;top:1729px;width:453px;height:1px;background:#7f7f7f;"></div>
<div style="left:2216px;top:1729px;width:434px;height:1px;background:#3f3f3f;"></div>
<div style="left:1232px;top:1772px;width:533px;height:1px;background:#b2b2b2;"></div>
<div style="left:1764px;top:1772px;width:453px;height:1px;background:#7f7f7f;"></div>
<div style="left:2216px;top:1772px;width:434px;height:1px;background:#3f3f3f;"></div>
<div style="left:1232px;top:1815px;width:533px;height:1px;background:#b2b2b2;"></div>
<div style="left:1764px;top:1815px;width:453px;height:1px;background:#7f7f7f;"></div>
<div style="left:2216px;top:1815px;width:434px;height:1px;background:#3f3f3f;"></div>
<div style="left:1232px;top:1858px;width:533px;height:1px;background:#b2b2b2;"></div>
<div style="left:1764px;top:1858px;width:453px;height:1px;background:#7f7f7f;"></div>
<div style="left:2216px;top:1858px;width:434px;height:1px;background:#3f3f3f;"></div>
<div style="left:1232px;top:1901px;width:533px;height:1px;background:#b2b2b2;"></div>
<div style="left:1764px;top:1901px;width:453px;height:1px;background:#7f7f7f;"></div>
<div style="left:2216px;top:1901px;width:434px;height:1px;background:#5b9bd5;"></div>
<div style="left:1232px;top:826px;width:1px;height:1076px;background:#b2b2b2;"></div>
<div style="left:1404px;top:826px;width:1px;height:1076px;background:#b2b2b2;"></div>
<div style="left:1764px;top:826px;width:1px;height:1076px;background:#7f7f7f;"></div>
<div style="left:1984px;top:826px;width:1px;height:1076px;background:#7f7f7f;"></div>
<div style="left:2215px;top:826px;width:1px;height:1076px;background:#7f7f7f;"></div>
<div style="left:2215px;top:826px;width:1px;height:1075px;background:#3f3f3f;"></div>
<div style="left:2438px;top:826px;width:1px;height:1075px;background:#3f3f3f;"></div>
<div style="left:2649px;top:826px;width:1px;height:1075px;background:#3f3f3f;"></div>
<svg class="i" style="left:1754px;top:1890.5px;" width="11" height="11" viewBox="0 0 11 11"><path d="M11 0v11H0V6.500h6.500V0z" fill="#3f55b5"/></svg>
<svg class="i" style="left:2205px;top:1890.5px;" width="11" height="11" viewBox="0 0 11 11"><path d="M11 0v11H0V6.500h6.500V0z" fill="#3f55b5"/></svg>
<svg class="i" style="left:2639px;top:1890.5px;" width="11" height="11" viewBox="0 0 11 11"><path d="M11 0v11H0V6.500h6.500V0z" fill="#3f55b5"/></svg>
<span class="t" style="left:1310.25px;top:831.48px;font-size:29.5px;line-height:37px;color:#000;letter-spacing:0.75px;">1</span>
<span class="t" style="left:1410px;top:831.48px;font-size:29.5px;line-height:37px;color:#000;letter-spacing:0.75px;">Iteration 1</span>
<span class="t" style="left:1858.62px;top:831.48px;font-size:29.5px;line-height:37px;color:#3f3f76;letter-spacing:0.75px;">20</span>
<span class="t" style="left:2093.25px;top:831.48px;font-size:29.5px;line-height:37px;color:#3f3f76;letter-spacing:0.75px;">4</span>
<span class="t" style="left:1310.75px;top:874.48px;font-size:29.5px;line-height:37px;color:#000;letter-spacing:0.75px;">2</span>
<span class="t" style="left:1410px;top:874.48px;font-size:29.5px;line-height:37px;color:#000;letter-spacing:0.75px;">Iteration 2</span>
<span class="t" style="left:1858.62px;top:874.48px;font-size:29.5px;line-height:37px;color:#3f3f76;letter-spacing:0.75px;">25</span>
<span class="t" style="left:2093.25px;top:874.48px;font-size:29.5px;line-height:37px;color:#3f3f76;letter-spacing:0.75px;">4</span>
<span class="t" style="left:1310.75px;top:917.48px;font-size:29.5px;line-height:37px;color:#000;letter-spacing:0.75px;">3</span>
<span class="t" style="left:1410px;top:917.48px;font-size:29.5px;line-height:37px;color:#000;letter-spacing:0.75px;">Iteration 3</span>
<span class="t" style="left:1858.62px;top:917.48px;font-size:29.5px;line-height:37px;color:#3f3f76;letter-spacing:0.75px;">30</span>
<span class="t" style="left:2093.25px;top:917.48px;font-size:29.5px;line-height:37px;color:#3f3f76;letter-spacing:0.75px;">4</span>
<span class="t" style="left:1311.25px;top:960.48px;font-size:29.5px;line-height:37px;color:#000;letter-spacing:0.75px;">4</span>
<span class="t" style="left:1410px;top:960.48px;font-size:29.5px;line-height:37px;color:#000;letter-spacing:0.75px;">Iteration 4</span>
<span class="t" style="left:1858.62px;top:960.48px;font-size:29.5px;line-height:37px;color:#3f3f76;letter-spacing:0.75px;">35</span>
<span class="t" style="left:2093.25px;top:960.48px;font-size:29.5px;line-height:37px;color:#3f3f76;letter-spacing:0.75px;">4</span>
<span class="t" style="left:1310.75px;top:1003.48px;font-size:29.5px;line-height:37px;color:#000;letter-spacing:0.75px;">5</span>
<span class="t" style="left:1410px;top:1003.48px;font-size:29.5px;line-height:37px;color:#000;letter-spacing:0.75px;">Iteration 5</span>
<span class="t" style="left:1859.12px;top:1003.48px;font-size:29.5px;line-height:37px;color:#3f3f76;letter-spacing:0.75px;">40</span>
<span class="t" style="left:2093.25px;top:1003.48px;font-size:29.5px;line-height:37px;color:#3f3f76;letter-spacing:0.75px;">4</span>
<span class="t" style="left:1310.75px;top:1046.48px;font-size:29.5px;line-height:37px;color:#000;letter-spacing:0.75px;">6</span>
<span class="t" style="left:1410px;top:1046.48px;font-size:29.5px;line-height:37px;color:#000;letter-spacing:0.75px;">Iteration 6</span>
<span class="t" style="left:1859.12px;top:1046.48px;font-size:29.5px;line-height:37px;color:#3f3f76;letter-spacing:0.75px;">45</span>
<span class="t" style="left:2093.25px;top:1046.48px;font-size:29.5px;line-height:37px;color:#3f3f76;letter-spacing:0.75px;">4</span>
<span class="t" style="left:1310.75px;top:1089.48px;font-size:29.5px;line-height:37px;color:#000;letter-spacing:0.75px;">7</span>
<span class="t" style="left:1410px;top:1089.48px;font-size:29.5px;line-height:37px;color:#000;letter-spacing:0.75px;">Iteration 7</span>
<span class="t" style="left:1858.62px;top:1089.48px;font-size:29.5px;line-height:37px;color:#3f3f76;letter-spacing:0.75px;">50</span>
<span class="t" style="left:2093.25px;top:1089.48px;font-size:29.5px;line-height:37px;color:#3f3f76;letter-spacing:0.75px;">4</span>
<span class="t" style="left:1310.75px;top:1132.48px;font-size:29.5px;line-height:37px;color:#000;letter-spacing:0.75px;">8</span>
<span class="t" style="left:1410px;top:1132.48px;font-size:29.5px;line-height:37px;color:#000;letter-spacing:0.75px;">Iteration 8</span>
<span class="t" style="left:1858.62px;top:1132.48px;font-size:29.5px;line-height:37px;color:#3f3f76;letter-spacing:0.75px;">55</span>
<span class="t" style="left:2093.25px;top:1132.48px;font-size:29.5px;line-height:37px;color:#3f3f76;letter-spacing:0.75px;">4</span>
<span class="t" style="left:1310.75px;top:1175.48px;font-size:29.5px;line-height:37px;color:#000;letter-spacing:0.75px;">9</span>
<span class="t" style="left:1410px;top:1175.48px;font-size:29.5px;line-height:37px;color:#000;letter-spacing:0.75px;">Iteration 9</span>
<span class="t" style="left:1858.62px;top:1175.48px;font-size:29.5px;line-height:37px;color:#3f3f76;letter-spacing:0.75px;">60</span>
<span class="t" style="left:2093.25px;top:1175.48px;font-size:29.5px;line-height:37px;color:#3f3f76;letter-spacing:0.75px;">4</span>
<span class="t" style="left:1301.88px;top:1218.48px;font-size:29.5px;line-height:37px;color:#000;letter-spacing:0.75px;">10</span>
<span class="t" style="left:1410px;top:1218.48px;font-size:29.5px;line-height:37px;color:#000;letter-spacing:0.75px;">Iteration 10</span>
<span class="t" style="left:1858.62px;top:1218.48px;font-size:29.5px;line-height:37px;color:#3f3f76;letter-spacing:0.75px;">65</span>
<span class="t" style="left:2093.25px;top:1218.48px;font-size:29.5px;line-height:37px;color:#3f3f76;letter-spacing:0.75px;">4</span>
<span class="t" style="left:1302.88px;top:1261.48px;font-size:29.5px;line-height:37px;color:#000;letter-spacing:0.75px;">11</span>
<span class="t" style="left:1410px;top:1261.48px;font-size:29.5px;line-height:37px;color:#000;letter-spacing:0.75px;">Iteration 11</span>
<span class="t" style="left:1858.62px;top:1261.48px;font-size:29.5px;line-height:37px;color:#3f3f76;letter-spacing:0.75px;">70</span>
<span class="t" style="left:2093.25px;top:1261.48px;font-size:29.5px;line-height:37px;color:#3f3f76;letter-spacing:0.75px;">4</span>
<span class="t" style="left:1301.88px;top:1304.48px;font-size:29.5px;line-height:37px;color:#000;letter-spacing:0.75px;">12</span>
<span class="t" style="left:1410px;top:1304.48px;font-size:29.5px;line-height:37px;color:#000;letter-spacing:0.75px;">Iteration 12</span>
<span class="t" style="left:1858.62px;top:1304.48px;font-size:29.5px;line-height:37px;color:#3f3f76;letter-spacing:0.75px;">75</span>
<span class="t" style="left:2093.25px;top:1304.48px;font-size:29.5px;line-height:37px;color:#3f3f76;letter-spacing:0.75px;">4</span>
<span class="t" style="left:1301.88px;top:1347.48px;font-size:29.5px;line-height:37px;color:#000;letter-spacing:0.75px;">13</span>
<span class="t" style="left:1410px;top:1347.48px;font-size:29.5px;line-height:37px;color:#000;letter-spacing:0.75px;">Iteration 13</span>
<span class="t" style="left:1858.62px;top:1347.48px;font-size:29.5px;line-height:37px;color:#3f3f76;letter-spacing:0.75px;">80</span>
<span class="t" style="left:2093.25px;top:1347.48px;font-size:29.5px;line-height:37px;color:#3f3f76;letter-spacing:0.75px;">4</span>
<span class="t" style="left:1301.88px;top:1390.48px;font-size:29.5px;line-height:37px;color:#000;letter-spacing:0.75px;">14</span>
<span class="t" style="left:1410px;top:1390.48px;font-size:29.5px;line-height:37px;color:#000;letter-spacing:0.75px;">Iteration 14</span>
<span class="t" style="left:1858.62px;top:1390.48px;font-size:29.5px;line-height:37px;color:#3f3f76;letter-spacing:0.75px;">85</span>
<span class="t" style="left:2093.25px;top:1390.48px;font-size:29.5px;line-height:37px;color:#3f3f76;letter-spacing:0.75px;">4</span>
<span class="t" style="left:1301.88px;top:1433.48px;font-size:29.5px;line-height:37px;color:#000;letter-spacing:0.75px;">15</span>
<span class="t" style="left:1410px;top:1433.48px;font-size:29.5px;line-height:37px;color:#000;letter-spacing:0.75px;">Iteration 15</span>
<span class="t" style="left:1858.62px;top:1433.48px;font-size:29.5px;line-height:37px;color:#3f3f76;letter-spacing:0.75px;">90</span>
<span class="t" style="left:2093.25px;top:1433.48px;font-size:29.5px;line-height:37px;color:#3f3f76;letter-spacing:0.75px;">4</span>
<span class="t" style="left:1301.88px;top:1476.48px;font-size:29.5px;line-height:37px;color:#000;letter-spacing:0.75px;">16</span>
<span class="t" style="left:1410px;top:1476.48px;font-size:29.5px;line-height:37px;color:#000;letter-spacing:0.75px;">Iteration 16</span>
<span class="t" style="left:1858.62px;top:1476.48px;font-size:29.5px;line-height:37px;color:#3f3f76;letter-spacing:0.75px;">95</span>
<span class="t" style="left:2093.25px;top:1476.48px;font-size:29.5px;line-height:37px;color:#3f3f76;letter-spacing:0.75px;">4</span>
<span class="t" style="left:1301.88px;top:1519.48px;font-size:29.5px;line-height:37px;color:#000;letter-spacing:0.75px;">17</span>
<span class="t" style="left:1410px;top:1519.48px;font-size:29.5px;line-height:37px;color:#000;letter-spacing:0.75px;">Iteration 17</span>
<span class="t" style="left:1849.25px;top:1519.48px;font-size:29.5px;line-height:37px;color:#3f3f76;letter-spacing:0.75px;">100</span>
<span class="t" style="left:2093.25px;top:1519.48px;font-size:29.5px;line-height:37px;color:#3f3f76;letter-spacing:0.75px;">4</span>
<span class="t" style="left:1301.88px;top:1562.48px;font-size:29.5px;line-height:37px;color:#000;letter-spacing:0.75px;">18</span>
<span class="t" style="left:1410px;top:1562.48px;font-size:29.5px;line-height:37px;color:#000;letter-spacing:0.75px;">Iteration 18</span>
<span class="t" style="left:1849.25px;top:1562.48px;font-size:29.5px;line-height:37px;color:#3f3f76;letter-spacing:0.75px;">105</span>
<span class="t" style="left:2093.25px;top:1562.48px;font-size:29.5px;line-height:37px;color:#3f3f76;letter-spacing:0.75px;">4</span>
<span class="t" style="left:1301.88px;top:1605.48px;font-size:29.5px;line-height:37px;color:#000;letter-spacing:0.75px;">19</span>
<span class="t" style="left:1410px;top:1605.48px;font-size:29.5px;line-height:37px;color:#000;letter-spacing:0.75px;">Iteration 19</span>
<span class="t" style="left:1850.25px;top:1605.48px;font-size:29.5px;line-height:37px;color:#3f3f76;letter-spacing:0.75px;">110</span>
<span class="t" style="left:2093.25px;top:1605.48px;font-size:29.5px;line-height:37px;color:#3f3f76;letter-spacing:0.75px;">4</span>
<span class="t" style="left:1302.38px;top:1648.48px;font-size:29.5px;line-height:37px;color:#000;letter-spacing:0.75px;">20</span>
<span class="t" style="left:1410px;top:1648.48px;font-size:29.5px;line-height:37px;color:#000;letter-spacing:0.75px;">Iteration 20</span>
<span class="t" style="left:1850.25px;top:1648.48px;font-size:29.5px;line-height:37px;color:#3f3f76;letter-spacing:0.75px;">115</span>
<span class="t" style="left:2093.25px;top:1648.48px;font-size:29.5px;line-height:37px;color:#3f3f76;letter-spacing:0.75px;">4</span>
<span class="t" style="left:1302.38px;top:1691.48px;font-size:29.5px;line-height:37px;color:#000;letter-spacing:0.75px;">21</span>
<span class="t" style="left:1410px;top:1691.48px;font-size:29.5px;line-height:37px;color:#000;letter-spacing:0.75px;">Iteration 21</span>
<span class="t" style="left:1849.25px;top:1691.48px;font-size:29.5px;line-height:37px;color:#3f3f76;letter-spacing:0.75px;">120</span>
<span class="t" style="left:2093.25px;top:1691.48px;font-size:29.5px;line-height:37px;color:#3f3f76;letter-spacing:0.75px;">4</span>
<span class="t" style="left:1302.38px;top:1734.48px;font-size:29.5px;line-height:37px;color:#000;letter-spacing:0.75px;">22</span>
<span class="t" style="left:1410px;top:1734.48px;font-size:29.5px;line-height:37px;color:#000;letter-spacing:0.75px;">Iteration 22</span>
<span class="t" style="left:1849.25px;top:1734.48px;font-size:29.5px;line-height:37px;color:#3f3f76;letter-spacing:0.75px;">125</span>
<span class="t" style="left:2093.25px;top:1734.48px;font-size:29.5px;line-height:37px;color:#3f3f76;letter-spacing:0.75px;">4</span>
<span class="t" style="left:1302.38px;top:1777.48px;font-size:29.5px;line-height:37px;color:#000;letter-spacing:0.75px;">23</span>
<span class="t" style="left:1410px;top:1777.48px;font-size:29.5px;line-height:37px;color:#000;letter-spacing:0.75px;">Iteration 23</span>
<span class="t" style="left:1849.25px;top:1777.48px;font-size:29.5px;line-height:37px;color:#3f3f76;letter-spacing:0.75px;">130</span>
<span class="t" style="left:2093.25px;top:1777.48px;font-size:29.5px;line-height:37px;color:#3f3f76;letter-spacing:0.75px;">4</span>
<span class="t" style="left:1302.38px;top:1820.48px;font-size:29.5px;line-height:37px;color:#000;letter-spacing:0.75px;">24</span>
<span class="t" style="left:1410px;top:1820.48px;font-size:29.5px;line-height:37px;color:#000;letter-spacing:0.75px;">Iteration 24</span>
<span class="t" style="left:1849.25px;top:1820.48px;font-size:29.5px;line-height:37px;color:#3f3f76;letter-spacing:0.75px;">135</span>
<span class="t" style="left:2093.25px;top:1820.48px;font-size:29.5px;line-height:37px;color:#3f3f76;letter-spacing:0.75px;">4</span>
<span class="t" style="left:1302.38px;top:1863.48px;font-size:29.5px;line-height:37px;color:#000;letter-spacing:0.75px;">25</span>
<span class="t" style="left:1410px;top:1863.48px;font-size:29.5px;line-height:37px;color:#000;letter-spacing:0.75px;">Iteration 25</span>
<span class="t" style="left:1849.25px;top:1863.48px;font-size:29.5px;line-height:37px;color:#3f3f76;letter-spacing:0.75px;">140</span>
<span class="t" style="left:2093.25px;top:1863.48px;font-size:29.5px;line-height:37px;color:#3f3f76;letter-spacing:0.75px;">4</span>
<div style="left:0px;top:1955.5px;width:3838px;height:48.5px;background:#f5f5f5;"></div>
<div style="left:0px;top:1955.6px;width:3798px;height:1.4px;background:#b4b4b4;"></div>
<div style="left:2279px;top:1957px;width:47px;height:46px;background:#efefef;"></div>
<div style="left:2318px;top:1962px;width:36px;height:36px;background:#f7f7f7;border-radius:50%;"></div>
<div style="left:157px;top:1955px;width:311px;height:44px;background:#fff;border-left:1.3px solid #c6c6c6;border-right:1.3px solid #c6c6c6;border-bottom:2.4px solid #217346;"></div>
<span class="t" style="left:169.95px;top:1960.6px;font-size:28px;line-height:35px;font-weight:700;color:#217346;transform:scaleX(1.0454);">DO NOT DUPLICATE</span>
<svg class="i" style="left:35px;top:1971px;" width="8" height="15" viewBox="0 0 8 15"><path d="M7.700 0v15L0 7.500z" fill="#c9c9c9"/></svg>
<svg class="i" style="left:82px;top:1971px;" width="8" height="15" viewBox="0 0 8 15"><path d="M0.300 0v15L8 7.500z" fill="#c9c9c9"/></svg>
<svg class="i" style="left:522px;top:1963px;" width="32" height="32" viewBox="0 0 32 32"><circle cx="16" cy="16" r="14.5" fill="none" stroke="#767676" stroke-width="2.2"/><path d="M16 8.500v15M8.500 16h15" stroke="#767676" stroke-width="3"/></svg>
<div style="left:2299px;top:1968px;width:5px;height:5px;background:#a3a3a3;"></div>
<div style="left:2299px;top:1977px;width:5px;height:5px;background:#a3a3a3;"></div>
<div style="left:2299px;top:1986px;width:5px;height:5px;background:#a3a3a3;"></div>
<svg class="i" style="left:2335.5px;top:1969px;" width="17" height="20" viewBox="0 0 17 20"><path d="M16.500 1.700v16.600a1.500 1.500 0 0 1-2.400 1.200L0.800 11.200a1.500 1.500 0 0 1 0-2.400L14.100 0.500A1.500 1.500 0 0 1 16.500 1.700z" fill="#6f6f6f"/></svg>
<div style="left:2363px;top:1969.6px;width:1332px;height:18.2px;background:#6f6f6f;border-radius:9px;"></div>
<svg class="i" style="left:3773px;top:1969px;" width="17" height="20" viewBox="0 0 17 20"><path d="M0.500 1.700v16.600a1.500 1.500 0 0 0 2.400 1.200L16.200 11.200a1.500 1.500 0 0 0 0-2.400L2.900 0.500A1.500 1.500 0 0 0 0.500 1.700z" fill="#6f6f6f"/></svg>
<div style="left:0px;top:2004px;width:3838px;height:48px;background:#f5f5f5;"></div>
<div style="left:0px;top:2002.5px;width:3838px;height:1.8px;background:#fdfdfd;"></div>
<span class="t" style="left:16.77px;top:2015.73px;font-size:23.3px;line-height:29px;color:#2b2b2b;transform:scaleX(0.9269);">Ready</span>
<svg class="i" style="left:123px;top:2013px;" width="32" height="31" viewBox="0 0 32 31"><circle cx="14" cy="4.300" r="3.300" fill="none" stroke="#2b2b2b" stroke-width="1.900"/>
<path d="M2 9.500c4 2 8 2.600 12 2.600s8-0.600 12-2.600l0.800 2.200c-3 1.600-5.800 2.300-8.300 2.600v5l3 8.500-2.300 0.800-3.700-8.500h-3l-3.700 8.500-2.300-0.800 3-8.500v-5c-2.500-0.300-5.300-1-8.300-2.600z" fill="none" stroke="#2b2b2b" stroke-width="1.700" stroke-linejoin="round"/>
<path d="M19 19l12 11M31 19l-12 11" stroke="#2b2b2b" stroke-width="2" stroke-linecap="round"/></svg>
<span class="t" style="left:164px;top:2015.73px;font-size:23.3px;line-height:29px;color:#2b2b2b;transform:scaleX(1.0091);">Accessibility: Investigate</span>
<div style="left:3170px;top:2004px;width:90px;height:48px;background:#dddddd;"></div>
<svg class="i" style="left:3199px;top:2013px;" width="30" height="29" viewBox="0 0 30 29"><path d="M1.200 1.200h27.600v26.600H1.200zM1.200 10h27.600M1.200 19h27.600M10.400 1.200v26.600M19.600 1.200v26.600" fill="none" stroke="#2b2b2b" stroke-width="2.200"/></svg>
<svg class="i" style="left:3289px;top:2013px;" width="32" height="29" viewBox="0 0 32 29"><rect x="1.100" y="1.100" width="29.800" height="26.800" fill="none" stroke="#2b2b2b" stroke-width="2.200"/><rect x="8.500" y="6.500" width="15" height="16" fill="none" stroke="#2b2b2b" stroke-width="2"/><path d="M11.500 11.500h9M11.500 15h9M11.500 18.500h9" stroke="#2b2b2b" stroke-width="1.800"/></svg>
<svg class="i" style="left:3379.5px;top:2013px;" width="32" height="29" viewBox="0 0 32 29"><rect x="1.100" y="1.100" width="29.800" height="26.800" fill="none" stroke="#2b2b2b" stroke-width="2.200"/><path d="M1.100 15.500h18.500V1.100M10.500 1.100v14.400" fill="none" stroke="#2b2b2b" stroke-width="2"/></svg>
<div style="left:3453px;top:2026.6px;width:17px;height:1.8px;background:#3a3a3a;"></div>
<div style="left:3483px;top:2026.7px;width:222.6px;height:1.6px;background:#5a5a5a;"></div>
<div style="left:3589px;top:2015.8px;width:10.6px;height:25.2px;background:#5f5f5f;"></div>
<div style="left:3718.4px;top:2026.6px;width:16.5px;height:1.8px;background:#3a3a3a;"></div>
<div style="left:3725.8px;top:2019px;width:1.8px;height:17px;background:#3a3a3a;"></div>
<span class="t" style="left:3765.83px;top:2015.73px;font-size:23.3px;line-height:29px;color:#2b2b2b;transform:scaleX(0.969);">100%</span>
</body></html>
